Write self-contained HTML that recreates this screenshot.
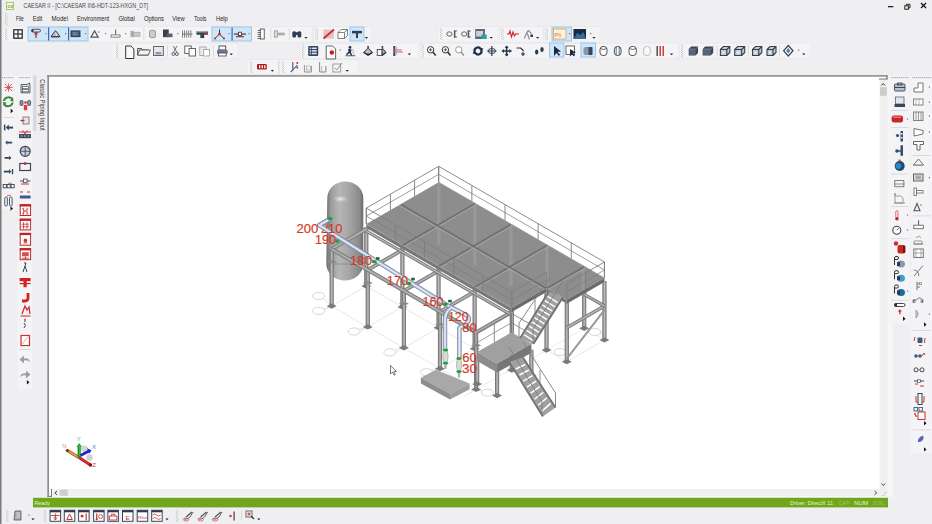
<!DOCTYPE html><html><head><meta charset="utf-8"><style>html,body{margin:0;padding:0;background:#efeff1;overflow:hidden}svg{display:block;font-family:"Liberation Sans",sans-serif}</style></head><body><svg width="932" height="524" viewBox="0 0 932 524"><rect x="0" y="0" width="932" height="524" fill="#efeff1" />
<rect x="0" y="0" width="1.5" height="524" fill="#7a7a7a" />
<rect x="6.5" y="2.5" width="7" height="7" fill="#f4f8e8" stroke="#a8c870" stroke-width="1"/>
<text x="7.5" y="8.2" font-size="4.2" fill="#6a8a30" font-weight="bold">CII</text>
<text x="23.5" y="8.4" font-size="7.1" fill="#4a4a4a" textLength="124.5" lengthAdjust="spacingAndGlyphs">CAESAR II - [C:\CAESAR II\6-HDT-123-HXGN_DT]</text>
<rect x="888" y="6" width="5.3" height="1.3" fill="#222" />
<g fill="none" stroke="#222" stroke-width="1"><rect x="904.8" y="5.8" width="3.6" height="3.4"/><path d="M906.3 5.8 V4.3 H910 V7.8 H908.4"/></g>
<g stroke="#111" stroke-width="1.2"><line x1="921" y1="3" x2="926" y2="8"/><line x1="926" y1="3" x2="921" y2="8"/></g>
<rect x="5" y="13" width="1" height="1" fill="#c4c4c4" />
<rect x="6.5" y="14" width="1" height="1" fill="#c4c4c4" />
<rect x="5" y="15" width="1" height="1" fill="#c4c4c4" />
<rect x="6.5" y="16" width="1" height="1" fill="#c4c4c4" />
<rect x="5" y="17" width="1" height="1" fill="#c4c4c4" />
<rect x="6.5" y="18" width="1" height="1" fill="#c4c4c4" />
<rect x="5" y="19" width="1" height="1" fill="#c4c4c4" />
<rect x="6.5" y="20" width="1" height="1" fill="#c4c4c4" />
<rect x="5" y="21" width="1" height="1" fill="#c4c4c4" />
<rect x="6.5" y="22" width="1" height="1" fill="#c4c4c4" />
<rect x="5" y="23" width="1" height="1" fill="#c4c4c4" />
<rect x="6.5" y="24" width="1" height="1" fill="#c4c4c4" />
<text x="15.9" y="21.1" font-size="6.9" fill="#1e1e1e" textLength="7.9" lengthAdjust="spacingAndGlyphs">File</text>
<text x="32.7" y="21.1" font-size="6.9" fill="#1e1e1e" textLength="9.7" lengthAdjust="spacingAndGlyphs">Edit</text>
<text x="51.5" y="21.1" font-size="6.9" fill="#1e1e1e" textLength="16.6" lengthAdjust="spacingAndGlyphs">Model</text>
<text x="76.9" y="21.1" font-size="6.9" fill="#1e1e1e" textLength="32.3" lengthAdjust="spacingAndGlyphs">Environment</text>
<text x="118.4" y="21.1" font-size="6.9" fill="#1e1e1e" textLength="16.4" lengthAdjust="spacingAndGlyphs">Global</text>
<text x="143.9" y="21.1" font-size="6.9" fill="#1e1e1e" textLength="20.1" lengthAdjust="spacingAndGlyphs">Options</text>
<text x="172.2" y="21.1" font-size="6.9" fill="#1e1e1e" textLength="12.4" lengthAdjust="spacingAndGlyphs">View</text>
<text x="194" y="21.1" font-size="6.9" fill="#1e1e1e" textLength="12.5" lengthAdjust="spacingAndGlyphs">Tools</text>
<text x="216" y="21.1" font-size="6.9" fill="#1e1e1e" textLength="11.8" lengthAdjust="spacingAndGlyphs">Help</text>
<rect x="3" y="26.5" width="309" height="15.5" fill="#f4f4f6" stroke="#e6e6e9" stroke-width="0.6"/>
<rect x="313.5" y="26.5" width="58.5" height="15.5" fill="#f4f4f6" stroke="#e6e6e9" stroke-width="0.6"/>
<rect x="438" y="26.5" width="61" height="15.5" fill="#f4f4f6" stroke="#e6e6e9" stroke-width="0.6"/>
<rect x="499.5" y="26.5" width="44.0" height="15.5" fill="#f4f4f6" stroke="#e6e6e9" stroke-width="0.6"/>
<rect x="544" y="26.5" width="56" height="15.5" fill="#f4f4f6" stroke="#e6e6e9" stroke-width="0.6"/>
<rect x="112" y="43.2" width="126" height="15.0" fill="#f4f4f6" stroke="#e6e6e9" stroke-width="0.6"/>
<rect x="300" y="43.2" width="119" height="15.0" fill="#f4f4f6" stroke="#e6e6e9" stroke-width="0.6"/>
<rect x="419.5" y="43.2" width="259.5" height="15.0" fill="#f4f4f6" stroke="#e6e6e9" stroke-width="0.6"/>
<rect x="679.5" y="43.2" width="131.5" height="15.0" fill="#f4f4f6" stroke="#e6e6e9" stroke-width="0.6"/>
<rect x="247" y="59.5" width="32" height="14.5" fill="#f4f4f6" stroke="#e6e6e9" stroke-width="0.6"/>
<rect x="279.5" y="59.5" width="78.5" height="14.5" fill="#f4f4f6" stroke="#e6e6e9" stroke-width="0.6"/>
<rect x="5" y="28" width="0.9" height="0.9" fill="#b8b8b8" />
<rect x="6.4" y="29" width="0.9" height="0.9" fill="#b8b8b8" />
<rect x="5" y="30" width="0.9" height="0.9" fill="#b8b8b8" />
<rect x="6.4" y="31" width="0.9" height="0.9" fill="#b8b8b8" />
<rect x="5" y="32" width="0.9" height="0.9" fill="#b8b8b8" />
<rect x="6.4" y="33" width="0.9" height="0.9" fill="#b8b8b8" />
<rect x="5" y="34" width="0.9" height="0.9" fill="#b8b8b8" />
<rect x="6.4" y="35" width="0.9" height="0.9" fill="#b8b8b8" />
<rect x="5" y="36" width="0.9" height="0.9" fill="#b8b8b8" />
<rect x="6.4" y="37" width="0.9" height="0.9" fill="#b8b8b8" />
<rect x="5" y="38" width="0.9" height="0.9" fill="#b8b8b8" />
<rect x="6.4" y="39" width="0.9" height="0.9" fill="#b8b8b8" />
<rect x="13" y="29" width="10" height="10" fill="#3e4550" rx="1"/>
<rect x="14.5" y="30.5" width="2.8" height="2.8" fill="#fff" />
<rect x="18.7" y="30.5" width="2.8" height="2.8" fill="#fff" />
<rect x="14.5" y="34.7" width="2.8" height="2.8" fill="#fff" />
<rect x="18.7" y="34.7" width="2.8" height="2.8" fill="#fff" />
<rect x="28.0" y="27.0" width="60.0" height="14.0" fill="#cfe5f8" stroke="#9ac6ec" stroke-width="1"/>
<rect x="48" y="27.5" width="1.2" height="13.0" fill="#3a6ab8" />
<rect x="68" y="27.5" width="1.2" height="13.0" fill="#3a6ab8" />
<rect x="31.5" y="29.3" width="9" height="2.6999999999999997" fill="#e4e4e4" rx="1.4" stroke="#3a4250" stroke-width="0.9"/>
<rect x="31.5" y="29.3" width="2" height="2.6999999999999997" fill="#2a3240" rx="1"/>
<rect x="35.4" y="33.5" width="1.2" height="4.5" fill="#c81818" />
<polygon points="34.0,34.58 38.0,34.58 36.0,32.6" fill="#c81818" />
<rect x="33.8" y="32.42" width="4.4" height="0.7" fill="#444" />
<rect x="45.4" y="33.0" width="1.2" height="1.2" fill="#777" />
<polygon points="51.0,36.52 55.5,30.58 60.0,36.52" fill="#b8bcc4" stroke="#2a3240" stroke-width="0.9"/>
<polygon points="55.5,31.75 57.3,34.9 56.0,35.8" fill="#f4f4f4" />
<path d="M51.5 38.05 l1 -1 l1 1 l1 -1 l1 1 l1 -1 l1 1 l1 -1 l1 1" fill="none" stroke="#d03030" stroke-width="0.7" />
<rect x="65" y="33.0" width="1.2" height="1.2" fill="#777" />
<rect x="70.5" y="30.4" width="10" height="6.75" fill="#34445a" />
<rect x="72.0" y="31.75" width="7" height="4.05" fill="#566a84" />
<path d="M73.5 32.65 h2 M73.5 34.45 h3" fill="none" stroke="#9aaabb" stroke-width="0.8" />
<rect x="85" y="33.0" width="1.2" height="1.2" fill="#777" />
<polygon points="91,37.15 94.6,30.85 98.2,37.15" fill="none" stroke="#555" stroke-width="1.2"/>
<text x="97.75" y="33.1" font-size="4" fill="#555" >x</text>
<rect x="105" y="33.0" width="1.2" height="1.2" fill="#777" />
<rect x="115.0" y="29.5" width="1.2" height="5.3999999999999995" fill="#777" />
<rect x="111" y="34.9" width="9" height="2.25" fill="#fff" stroke="#777" stroke-width="0.9"/>
<rect x="125" y="33.0" width="1.2" height="1.2" fill="#777" />
<rect x="130.5" y="30.85" width="3.3249999999999997" height="6.3" fill="#aaa" />
<rect x="133.35" y="32.2" width="6.6499999999999995" height="4.05" fill="#c8c8c8" stroke="#999" stroke-width="0.6"/>
<rect x="143.5" y="28" width="0.8" height="12" fill="#d6d6d6" />
<rect x="149.5" y="30.4" width="6" height="7.2" fill="#ccc" rx="1.5" stroke="#888" stroke-width="0.8"/>
<rect x="163" y="29.5" width="5.7" height="7.6499999999999995" fill="#3a3f48" />
<rect x="166.8" y="33.55" width="5.7" height="3.6" fill="#5a606a" />
<rect x="177.2" y="33.0" width="1.2" height="1.2" fill="#777" />
<rect x="182.0" y="30.4" width="0.9" height="7.2" fill="#777" />
<rect x="184.1" y="30.4" width="0.9" height="7.2" fill="#777" />
<rect x="186.2" y="30.4" width="0.9" height="7.2" fill="#777" />
<rect x="188.3" y="30.4" width="0.9" height="7.2" fill="#777" />
<rect x="190.4" y="30.4" width="0.9" height="7.2" fill="#777" />
<rect x="182" y="33.55" width="10.5" height="1" fill="#777" />
<rect x="196.5" y="31.3" width="11.5" height="3.42" fill="#3a3f48" />
<rect x="200.295" y="34.0" width="3.91" height="4.05" fill="#3a3f48" />
<rect x="197.0" y="31.3" width="10.5" height="1.08" fill="#b8b8c0" />
<rect x="205.7" y="32.2" width="1.7249999999999999" height="2.25" fill="#c04040" />
<rect x="212.0" y="27.0" width="39.5" height="14.0" fill="#cfe5f8" stroke="#9ac6ec" stroke-width="1"/>
<rect x="231.5" y="27.5" width="1.2" height="13.0" fill="#3a6ab8" />
<path d="M219.5 29.5 V34.0 L215 38.5 M219.5 34.0 L224 38.5" fill="none" stroke="#333" stroke-width="1" />
<circle cx="219.5" cy="34.0" r="1.3" fill="#d42020"/>
<circle cx="215" cy="38.5" r="1" fill="#d42020"/>
<circle cx="224" cy="38.5" r="1" fill="#d42020"/>
<rect x="228.5" y="33.0" width="1.2" height="1.2" fill="#777" />
<rect x="234" y="33.5" width="12" height="1.1" fill="#333" />
<rect x="238.5" y="32.2" width="3" height="3.4" fill="#fff" stroke="#333" stroke-width="0.8"/>
<rect x="236" y="36.0" width="8" height="1.2" fill="#d42020" />
<rect x="248.5" y="33.0" width="1.2" height="1.2" fill="#777" />
<rect x="260.2" y="29" width="4.05" height="10" fill="#fff" stroke="#555" stroke-width="0.9"/>
<rect x="257.5" y="30" width="3.6" height="0.8" fill="#555" />
<rect x="257.5" y="32" width="3.6" height="0.8" fill="#555" />
<rect x="257.5" y="34" width="3.6" height="0.8" fill="#555" />
<rect x="257.5" y="36" width="3.6" height="0.8" fill="#555" />
<rect x="257.5" y="38" width="3.6" height="0.8" fill="#555" />
<rect x="270.5" y="28" width="0.8" height="12" fill="#d6d6d6" />
<rect x="274.3" y="30.85" width="3.15" height="6.3" fill="#ddd" stroke="#888" stroke-width="0.7"/>
<rect x="277.45" y="32.65" width="7.35" height="2.6999999999999997" fill="#aaa" />
<rect x="288.8" y="28" width="0.8" height="12" fill="#d6d6d6" />
<rect x="292.3" y="31.3" width="3.78" height="6.3" fill="#2e3f55" rx="1.5"/>
<rect x="297.52000000000004" y="31.3" width="3.78" height="6.3" fill="#2e3f55" rx="1.5"/>
<rect x="295.0" y="32.2" width="3.6" height="2.6999999999999997" fill="#2e3f55" />
<polygon points="304.4,37 307.6,37 306,38.8" fill="#222" />
<rect x="315.5" y="28" width="0.9" height="0.9" fill="#b8b8b8" />
<rect x="316.9" y="29" width="0.9" height="0.9" fill="#b8b8b8" />
<rect x="315.5" y="30" width="0.9" height="0.9" fill="#b8b8b8" />
<rect x="316.9" y="31" width="0.9" height="0.9" fill="#b8b8b8" />
<rect x="315.5" y="32" width="0.9" height="0.9" fill="#b8b8b8" />
<rect x="316.9" y="33" width="0.9" height="0.9" fill="#b8b8b8" />
<rect x="315.5" y="34" width="0.9" height="0.9" fill="#b8b8b8" />
<rect x="316.9" y="35" width="0.9" height="0.9" fill="#b8b8b8" />
<rect x="315.5" y="36" width="0.9" height="0.9" fill="#b8b8b8" />
<rect x="316.9" y="37" width="0.9" height="0.9" fill="#b8b8b8" />
<rect x="315.5" y="38" width="0.9" height="0.9" fill="#b8b8b8" />
<rect x="316.9" y="39" width="0.9" height="0.9" fill="#b8b8b8" />
<rect x="323.5" y="29.5" width="10.5" height="9" fill="#e8c0c0" />
<path d="M323.5 38.5 L334.0 29.5" fill="none" stroke="#c03030" stroke-width="1.8" />
<path d="M338 32.5 h6.5 v6 h-6.5 z M338 32.5 l3 -3 h6.5 v6 l-3 3 M344.5 32.5 l3 -3" fill="#fff" stroke="#666" stroke-width="0.8" />
<rect x="350.0" y="27.0" width="14.0" height="14.0" fill="#cfe5f8" stroke="#9ac6ec" stroke-width="1"/>
<rect x="352" y="30.85" width="10" height="2.5200000000000005" fill="#2e3f55" />
<rect x="356.0" y="32.2" width="2" height="5.8500000000000005" fill="#2e3f55" />
<polygon points="364.9,37 368.1,37 366.5,38.8" fill="#222" />
<rect x="440" y="28" width="0.9" height="0.9" fill="#b8b8b8" />
<rect x="441.4" y="29" width="0.9" height="0.9" fill="#b8b8b8" />
<rect x="440" y="30" width="0.9" height="0.9" fill="#b8b8b8" />
<rect x="441.4" y="31" width="0.9" height="0.9" fill="#b8b8b8" />
<rect x="440" y="32" width="0.9" height="0.9" fill="#b8b8b8" />
<rect x="441.4" y="33" width="0.9" height="0.9" fill="#b8b8b8" />
<rect x="440" y="34" width="0.9" height="0.9" fill="#b8b8b8" />
<rect x="441.4" y="35" width="0.9" height="0.9" fill="#b8b8b8" />
<rect x="440" y="36" width="0.9" height="0.9" fill="#b8b8b8" />
<rect x="441.4" y="37" width="0.9" height="0.9" fill="#b8b8b8" />
<rect x="440" y="38" width="0.9" height="0.9" fill="#b8b8b8" />
<rect x="441.4" y="39" width="0.9" height="0.9" fill="#b8b8b8" />
<ellipse cx="449.4" cy="34.0" rx="2.6" ry="2.2" fill="none" stroke="#555" stroke-width="0.9"/>
<rect x="453.9" y="30.5" width="1.5" height="7" fill="#555" />
<rect x="453.9" y="30.5" width="3" height="1" fill="#555" />
<rect x="453.9" y="36.5" width="3" height="1" fill="#555" />
<ellipse cx="464.2" cy="34.0" rx="2.6" ry="2.2" fill="none" stroke="#555" stroke-width="0.9"/>
<rect x="467.7" y="30.5" width="1.5" height="7" fill="#555" />
<rect x="467.7" y="30.5" width="3" height="1" fill="#555" />
<rect x="467.7" y="36.5" width="3" height="1" fill="#555" />
<rect x="475.2" y="29" width="9.775" height="10" fill="#5a6a80" />
<rect x="476.2" y="31" width="6.8999999999999995" height="5.5" fill="#c8d4e0" />
<rect x="481.525" y="34.5" width="5.175" height="4.5" fill="#2aa0a0" />
<polygon points="489.59999999999997,37 492.8,37 491.2,38.8" fill="#222" />
<rect x="501.2" y="28" width="0.9" height="0.9" fill="#b8b8b8" />
<rect x="502.59999999999997" y="29" width="0.9" height="0.9" fill="#b8b8b8" />
<rect x="501.2" y="30" width="0.9" height="0.9" fill="#b8b8b8" />
<rect x="502.59999999999997" y="31" width="0.9" height="0.9" fill="#b8b8b8" />
<rect x="501.2" y="32" width="0.9" height="0.9" fill="#b8b8b8" />
<rect x="502.59999999999997" y="33" width="0.9" height="0.9" fill="#b8b8b8" />
<rect x="501.2" y="34" width="0.9" height="0.9" fill="#b8b8b8" />
<rect x="502.59999999999997" y="35" width="0.9" height="0.9" fill="#b8b8b8" />
<rect x="501.2" y="36" width="0.9" height="0.9" fill="#b8b8b8" />
<rect x="502.59999999999997" y="37" width="0.9" height="0.9" fill="#b8b8b8" />
<rect x="501.2" y="38" width="0.9" height="0.9" fill="#b8b8b8" />
<rect x="502.59999999999997" y="39" width="0.9" height="0.9" fill="#b8b8b8" />
<path d="M507 34.0 h2 l1 -3 l1.5 6 l1.5 -5 l1.5 4 l1 -2 h3.5" fill="none" stroke="#d42020" stroke-width="1.1" />
<path d="M524.4 38.5 q2 -6 4 -8 l3 3 M527.4 33.5 l2 6" fill="none" stroke="#888" stroke-width="1.1" />
<rect x="530.4" y="34.5" width="2.5" height="2.5" fill="#333" />
<polygon points="536.0,37 539.2,37 537.6,38.8" fill="#222" />
<rect x="545.5" y="28" width="0.9" height="0.9" fill="#b8b8b8" />
<rect x="546.9" y="29" width="0.9" height="0.9" fill="#b8b8b8" />
<rect x="545.5" y="30" width="0.9" height="0.9" fill="#b8b8b8" />
<rect x="546.9" y="31" width="0.9" height="0.9" fill="#b8b8b8" />
<rect x="545.5" y="32" width="0.9" height="0.9" fill="#b8b8b8" />
<rect x="546.9" y="33" width="0.9" height="0.9" fill="#b8b8b8" />
<rect x="545.5" y="34" width="0.9" height="0.9" fill="#b8b8b8" />
<rect x="546.9" y="35" width="0.9" height="0.9" fill="#b8b8b8" />
<rect x="545.5" y="36" width="0.9" height="0.9" fill="#b8b8b8" />
<rect x="546.9" y="37" width="0.9" height="0.9" fill="#b8b8b8" />
<rect x="545.5" y="38" width="0.9" height="0.9" fill="#b8b8b8" />
<rect x="546.9" y="39" width="0.9" height="0.9" fill="#b8b8b8" />
<rect x="552.0" y="27.0" width="19.5" height="14.0" fill="#cfe5f8" stroke="#9ac6ec" stroke-width="1"/>
<rect x="553.5" y="29" width="12.5" height="10" fill="#fff2dd" stroke="#e09040" stroke-width="0.7"/>
<text x="554.5" y="36.5" font-size="5.5" fill="#d07020" >Plt</text>
<rect x="569" y="33.0" width="1.2" height="1.2" fill="#777" />
<rect x="573.5" y="29" width="12.5" height="10" fill="#1a2a40" />
<polygon points="573.5,39 577.25,33.0 580.375,35.0 583.5,32.0 586.0,39" fill="#3a6a9a" />
<rect x="590" y="33.0" width="1.2" height="1.2" fill="#777" />
<polygon points="592.4,37 595.6,37 594,38.8" fill="#222" />
<rect x="116" y="44" width="0.9" height="0.9" fill="#b8b8b8" />
<rect x="117.4" y="45" width="0.9" height="0.9" fill="#b8b8b8" />
<rect x="116" y="46" width="0.9" height="0.9" fill="#b8b8b8" />
<rect x="117.4" y="47" width="0.9" height="0.9" fill="#b8b8b8" />
<rect x="116" y="48" width="0.9" height="0.9" fill="#b8b8b8" />
<rect x="117.4" y="49" width="0.9" height="0.9" fill="#b8b8b8" />
<rect x="116" y="50" width="0.9" height="0.9" fill="#b8b8b8" />
<rect x="117.4" y="51" width="0.9" height="0.9" fill="#b8b8b8" />
<rect x="116" y="52" width="0.9" height="0.9" fill="#b8b8b8" />
<rect x="117.4" y="53" width="0.9" height="0.9" fill="#b8b8b8" />
<rect x="116" y="54" width="0.9" height="0.9" fill="#b8b8b8" />
<rect x="117.4" y="55" width="0.9" height="0.9" fill="#b8b8b8" />
<rect x="116" y="56" width="0.9" height="0.9" fill="#b8b8b8" />
<rect x="117.4" y="57" width="0.9" height="0.9" fill="#b8b8b8" />
<path d="M125.7 46 h5.199999999999999 l3 3 v9.5 h-8.2 z" fill="#fafafa" stroke="#333" stroke-width="1" />
<path d="M137.6 48.5 h4 l1 1.5 h5.800000000000001 v5 h-10.8 z" fill="#ddd" stroke="#444" stroke-width="0.9" />
<path d="M137.6 55.0 l2 -5 h10.8 l-2 5 z" fill="#f4f4f4" stroke="#444" stroke-width="0.8" />
<rect x="153.6" y="46.5" width="9.7" height="9" fill="#e8e8ec" stroke="#555" stroke-width="0.9"/>
<rect x="155.6" y="52" width="5.699999999999999" height="2.5" fill="#8a9ab0" />
<rect x="167" y="45" width="0.8" height="12" fill="#d6d6d6" />
<circle cx="173.4" cy="54" r="1.5" fill="none" stroke="#555" stroke-width="0.9"/><circle cx="176.9" cy="54" r="1.5" fill="none" stroke="#555" stroke-width="0.9"/>
<path d="M173.4 46 L176.9 52.5 M176.9 46 L173.4 52.5" fill="none" stroke="#666" stroke-width="0.9" />
<rect x="184.8" y="46" width="6.419999999999999" height="7.5" fill="#fff" stroke="#555" stroke-width="0.9"/>
<rect x="189.08" y="48.5" width="6.419999999999999" height="7.5" fill="#fff" stroke="#555" stroke-width="0.9"/>
<rect x="199.8" y="47" width="6.24" height="8.5" fill="#eee" stroke="#999" stroke-width="0.8"/>
<rect x="203.64000000000001" y="49.5" width="5.76" height="6.5" fill="#fff" stroke="#999" stroke-width="0.8"/>
<rect x="213" y="45" width="0.8" height="12" fill="#d6d6d6" />
<rect x="219" y="46" width="6.699999999999999" height="4.0" fill="#fff" stroke="#444" stroke-width="0.9"/>
<rect x="217" y="49.5" width="10.7" height="4.5" fill="#6a7a8e" rx="1.5"/>
<rect x="218.5" y="53.0" width="7.699999999999999" height="3.0" fill="#fff" stroke="#444" stroke-width="0.8"/>
<polygon points="229.70000000000002,53.5 232.9,53.5 231.3,55.3" fill="#222" />
<rect x="302" y="44" width="0.9" height="0.9" fill="#b8b8b8" />
<rect x="303.4" y="45" width="0.9" height="0.9" fill="#b8b8b8" />
<rect x="302" y="46" width="0.9" height="0.9" fill="#b8b8b8" />
<rect x="303.4" y="47" width="0.9" height="0.9" fill="#b8b8b8" />
<rect x="302" y="48" width="0.9" height="0.9" fill="#b8b8b8" />
<rect x="303.4" y="49" width="0.9" height="0.9" fill="#b8b8b8" />
<rect x="302" y="50" width="0.9" height="0.9" fill="#b8b8b8" />
<rect x="303.4" y="51" width="0.9" height="0.9" fill="#b8b8b8" />
<rect x="302" y="52" width="0.9" height="0.9" fill="#b8b8b8" />
<rect x="303.4" y="53" width="0.9" height="0.9" fill="#b8b8b8" />
<rect x="302" y="54" width="0.9" height="0.9" fill="#b8b8b8" />
<rect x="303.4" y="55" width="0.9" height="0.9" fill="#b8b8b8" />
<rect x="302" y="56" width="0.9" height="0.9" fill="#b8b8b8" />
<rect x="303.4" y="57" width="0.9" height="0.9" fill="#b8b8b8" />
<rect x="308.2" y="46" width="10" height="10" fill="#2e4560" rx="1"/>
<rect x="309.7" y="47.5" width="1.5" height="1.6" fill="#dde" />
<rect x="312.0" y="47.5" width="4.7" height="1.6" fill="#dde" />
<rect x="309.7" y="50.1" width="1.5" height="1.6" fill="#dde" />
<rect x="312.0" y="50.1" width="4.7" height="1.6" fill="#dde" />
<rect x="309.7" y="52.7" width="1.5" height="1.6" fill="#dde" />
<rect x="312.0" y="52.7" width="4.7" height="1.6" fill="#dde" />
<path d="M326.2 46 h6.4 l3 3 v10 h-9.4 z" fill="#fff" stroke="#555" stroke-width="0.9" />
<circle cx="331.84" cy="52.5" r="2.2" fill="#d01818"/>
<rect x="339.6" y="49.5" width="1.2" height="1.2" fill="#777" />
<circle cx="350" cy="47.4" r="1.4" fill="#24364e"/>
<polygon points="348,49 351.5,49.2 351,52.5 352.5,55.5 351,55.8 349.5,53 347.2,55 345.8,54.5 348.5,51.5" fill="#24364e" />
<path d="M352 49 l2 2 M352.5 51 l1.5 3.5" fill="none" stroke="#aab4c0" stroke-width="0.9" />
<rect x="345.5" y="55.4" width="9.7" height="0.8" fill="#333" />
<polygon points="368.1,47.5 373.2,52.8 368.1,56 363,52.8" fill="#2a2a2a" />
<polygon points="368.1,48.2 371.59999999999997,52.6 368.1,53.8 364.6,52.6" fill="#b8c0c8" />
<rect x="367.3" y="46" width="1.6" height="1.8" fill="#333" />
<polygon points="382.37,47.5 386.59999999999997,52.8 382.37,56 379.08,52.8" fill="#2a2a2a" />
<polygon points="382.37,48.2 385.2,52.6 382.37,54" fill="#a8b4c0" />
<rect x="377.2" y="49.5" width="4.7" height="6.0" fill="#f4f4f4" stroke="#333" stroke-width="0.8"/>
<rect x="381.57" y="46" width="1.6" height="1.8" fill="#333" />
<rect x="393.3" y="46" width="2" height="10" fill="#2e4560" />
<rect x="393.3" y="49.5" width="8.399999999999999" height="1" fill="#d06060" />
<rect x="393.3" y="51.5" width="9.600000000000001" height="1" fill="#d06060" />
<rect x="396.3" y="47" width="0.8" height="8" fill="#9ab" />
<polygon points="407.79999999999995,53.5 411.0,53.5 409.4,55.3" fill="#222" />
<rect x="421.4" y="44" width="0.9" height="0.9" fill="#b8b8b8" />
<rect x="422.79999999999995" y="45" width="0.9" height="0.9" fill="#b8b8b8" />
<rect x="421.4" y="46" width="0.9" height="0.9" fill="#b8b8b8" />
<rect x="422.79999999999995" y="47" width="0.9" height="0.9" fill="#b8b8b8" />
<rect x="421.4" y="48" width="0.9" height="0.9" fill="#b8b8b8" />
<rect x="422.79999999999995" y="49" width="0.9" height="0.9" fill="#b8b8b8" />
<rect x="421.4" y="50" width="0.9" height="0.9" fill="#b8b8b8" />
<rect x="422.79999999999995" y="51" width="0.9" height="0.9" fill="#b8b8b8" />
<rect x="421.4" y="52" width="0.9" height="0.9" fill="#b8b8b8" />
<rect x="422.79999999999995" y="53" width="0.9" height="0.9" fill="#b8b8b8" />
<rect x="421.4" y="54" width="0.9" height="0.9" fill="#b8b8b8" />
<rect x="422.79999999999995" y="55" width="0.9" height="0.9" fill="#b8b8b8" />
<rect x="421.4" y="56" width="0.9" height="0.9" fill="#b8b8b8" />
<rect x="422.79999999999995" y="57" width="0.9" height="0.9" fill="#b8b8b8" />
<circle cx="430.6" cy="49.8" r="3.2" fill="#fff" stroke="#333" stroke-width="1"/>
<path d="M432.8 52 l2.9000000000000004 3.5" fill="none" stroke="#333" stroke-width="1.6" />
<path d="M429.0 49.8 h3.2 M430.6 48.2 v3.2" fill="none" stroke="#333" stroke-width="0.8" />
<circle cx="445.40000000000003" cy="49.8" r="3.2" fill="#fff" stroke="#333" stroke-width="1"/>
<path d="M447.6 52 l2.9000000000000004 3.5" fill="none" stroke="#333" stroke-width="1.6" />
<path d="M443.8 49.8 h3.2 M445.40000000000003 48.2 v3.2" fill="none" stroke="#333" stroke-width="0.8" />
<circle cx="458.8" cy="49.8" r="3.2" fill="#fff" stroke="#999" stroke-width="1"/>
<path d="M461 52 l2.9000000000000004 3.5" fill="none" stroke="#999" stroke-width="1.6" />
<path d="M474.6 51.8 A3.4 3.4 0 0 1 480.79999999999995 49.2" fill="none" stroke="#1e2e48" stroke-width="2.2" />
<path d="M481.4 50.2 A3.4 3.4 0 0 1 475.20000000000005 52.8" fill="none" stroke="#1e2e48" stroke-width="2.2" />
<polygon points="483.4,48.5 478.79999999999995,47.8 481.4,51.8" fill="#1e2e48" />
<polygon points="472.6,53.5 477.20000000000005,54.2 474.6,50.2" fill="#1e2e48" />
<path d="M491.84999999999997 46 v10 M487.2 51.0 h9.3" fill="none" stroke="#2a3a50" stroke-width="1.2" />
<ellipse cx="491.84999999999997" cy="51.0" rx="3.6500000000000004" ry="2.5" fill="none" stroke="#2a3a50" stroke-width="0.9"/>
<path d="M506.65 46 v10 M502 51.0 h9.3" fill="none" stroke="#2a3a50" stroke-width="1.6" />
<polygon points="506.65,45.5 504.65,48 508.65,48" fill="#2a3a50" />
<polygon points="506.65,56.5 504.65,54 508.65,54" fill="#2a3a50" />
<polygon points="501.5,51.0 504,49.0 504,53.0" fill="#2a3a50" />
<polygon points="511.8,51.0 509.3,49.0 509.3,53.0" fill="#2a3a50" />
<path d="M516.7 48 h4 l3 3" fill="none" stroke="#333" stroke-width="1.2" />
<path d="M523.0 52 v4 M521.0 54 h4" fill="none" stroke="#333" stroke-width="1.2" />
<ellipse cx="536.7" cy="52.0" rx="1.7" ry="2.6" fill="#2a3a50"/><ellipse cx="542.0" cy="49.5" rx="1.7" ry="2.6" fill="#2a3a50"/>
<rect x="549.5" y="43.0" width="14.5" height="14.0" fill="#cfe5f8" stroke="#9ac6ec" stroke-width="1"/>
<polygon points="554,46 554,56 556.5,53.0 559,56 560,54.5 557.5,52.0 561,51.5" fill="#1a2a40" />
<rect x="566" y="46" width="8.5" height="8.5" fill="#fff" stroke="#444" stroke-width="0.8"/>
<polygon points="570,49 570,56.5 572,54.5 574,56.5 575,55.0 573,53.0 576,52.5" fill="#1a2a40" />
<rect x="581.0" y="43.0" width="14.5" height="14.0" fill="#cfe5f8" stroke="#9ac6ec" stroke-width="1"/>
<rect x="583.5" y="47" width="9" height="8" fill="#8a98aa" rx="2"/>
<rect x="588.55" y="47" width="3.8499999999999996" height="8" fill="#34475e" />
<rect x="600" y="46.5" width="7" height="9" fill="#fff" rx="3" stroke="#444" stroke-width="0.9"/>
<path d="M600 48.5 q3.5 2 7 0" fill="none" stroke="#444" stroke-width="0.8" />
<rect x="614.4" y="46.5" width="6.6" height="9" fill="#fff" rx="3" stroke="#3a4a5e" stroke-width="1"/>
<path d="M616.1999999999999 47 v8 M619.1999999999999 47 v8" fill="none" stroke="#3a4a5e" stroke-width="0.8" />
<rect x="629" y="46.5" width="7.300000000000001" height="9" fill="#fff" rx="3" stroke="#444" stroke-width="0.9"/>
<path d="M629 48.5 q3.6500000000000004 2 7.300000000000001 0" fill="none" stroke="#444" stroke-width="0.8" />
<rect x="643.6" y="46.5" width="6.699999999999999" height="9" fill="#fafafa" rx="3" stroke="#aaa" stroke-width="0.8"/>
<rect x="656.5" y="46" width="1.4" height="10" fill="#444" />
<rect x="659.5" y="46" width="1.4" height="10" fill="#c83030" />
<rect x="662.5" y="46" width="1.4" height="10" fill="#c83030" />
<polygon points="670.0,53.5 673.2,53.5 671.6,55.3" fill="#222" />
<rect x="681" y="44" width="0.9" height="0.9" fill="#b8b8b8" />
<rect x="682.4" y="45" width="0.9" height="0.9" fill="#b8b8b8" />
<rect x="681" y="46" width="0.9" height="0.9" fill="#b8b8b8" />
<rect x="682.4" y="47" width="0.9" height="0.9" fill="#b8b8b8" />
<rect x="681" y="48" width="0.9" height="0.9" fill="#b8b8b8" />
<rect x="682.4" y="49" width="0.9" height="0.9" fill="#b8b8b8" />
<rect x="681" y="50" width="0.9" height="0.9" fill="#b8b8b8" />
<rect x="682.4" y="51" width="0.9" height="0.9" fill="#b8b8b8" />
<rect x="681" y="52" width="0.9" height="0.9" fill="#b8b8b8" />
<rect x="682.4" y="53" width="0.9" height="0.9" fill="#b8b8b8" />
<rect x="681" y="54" width="0.9" height="0.9" fill="#b8b8b8" />
<rect x="682.4" y="55" width="0.9" height="0.9" fill="#b8b8b8" />
<rect x="681" y="56" width="0.9" height="0.9" fill="#b8b8b8" />
<rect x="682.4" y="57" width="0.9" height="0.9" fill="#b8b8b8" />
<polygon points="688.7,49.0 691.2,46.5 698.0,46.5 698.0,53.0 695.5,55.5 688.7,55.5" fill="#3a4658" />
<rect x="689.2" y="49.3" width="6.300000000000001" height="5.7" fill="#56647a" />
<path d="M689.2 49.1 h6.300000000000001 l2.5 -2.5" fill="none" stroke="#9aa4b4" stroke-width="0.6" />
<polygon points="702.7,49.0 705.2,46.5 713.2,46.5 713.2,53.0 710.7,55.5 702.7,55.5" fill="#3a4658" />
<rect x="703.2" y="49.3" width="7.5" height="5.7" fill="#56647a" />
<path d="M703.2 49.1 h7.5 l2.5 -2.5" fill="none" stroke="#9aa4b4" stroke-width="0.6" />
<rect x="716.7" y="45" width="0.8" height="12" fill="#d6d6d6" />
<path d="M720.4 49.5 h6.4 v6 h-6.4 z M720.4 49.5 l3 -3 h6.4 v6 l-3 3 M726.8 49.5 l3 -3" fill="#c4cad4" stroke="#34404e" stroke-width="1.1" />
<rect x="722.4" y="51.5" width="2.4000000000000004" height="2" fill="#f0f2f4" />
<path d="M734.7 49.5 h7 v6 h-7 z M734.7 49.5 l3 -3 h7 v6 l-3 3 M741.7 49.5 l3 -3" fill="#c4cad4" stroke="#34404e" stroke-width="1.1" />
<rect x="736.7" y="51.5" width="3" height="2" fill="#f0f2f4" />
<rect x="747.8" y="45" width="0.8" height="12" fill="#d6d6d6" />
<path d="M752.5 49.5 h6.300000000000001 v6 h-6.300000000000001 z M752.5 49.5 l3 -3 h6.300000000000001 v6 l-3 3 M758.8 49.5 l3 -3" fill="#c4cad4" stroke="#34404e" stroke-width="1.1" />
<rect x="754.5" y="51.5" width="2.3000000000000007" height="2" fill="#f0f2f4" />
<path d="M767 49.5 h6 v6 h-6 z M767 49.5 l3 -3 h6 v6 l-3 3 M773 49.5 l3 -3" fill="#c4cad4" stroke="#34404e" stroke-width="1.1" />
<rect x="769" y="51.5" width="2" height="2" fill="#f0f2f4" />
<rect x="779" y="45" width="0.8" height="12" fill="#d6d6d6" />
<polygon points="788.3000000000001,45.5 793.0,50.75 788.3000000000001,56.0 783.6,50.75" fill="#fff" stroke="#2e4560" stroke-width="1.2"/>
<polygon points="788.3000000000001,48.0 790.5,50.75 788.3000000000001,53.5 786.1,50.75" fill="#6a7a90" />
<rect x="798" y="49.5" width="1.2" height="1.2" fill="#777" />
<polygon points="802.1999999999999,53.5 805.4,53.5 803.8,55.3" fill="#222" />
<rect x="250" y="61" width="0.9" height="0.9" fill="#b8b8b8" />
<rect x="251.4" y="62" width="0.9" height="0.9" fill="#b8b8b8" />
<rect x="250" y="63" width="0.9" height="0.9" fill="#b8b8b8" />
<rect x="251.4" y="64" width="0.9" height="0.9" fill="#b8b8b8" />
<rect x="250" y="65" width="0.9" height="0.9" fill="#b8b8b8" />
<rect x="251.4" y="66" width="0.9" height="0.9" fill="#b8b8b8" />
<rect x="250" y="67" width="0.9" height="0.9" fill="#b8b8b8" />
<rect x="251.4" y="68" width="0.9" height="0.9" fill="#b8b8b8" />
<rect x="250" y="69" width="0.9" height="0.9" fill="#b8b8b8" />
<rect x="251.4" y="70" width="0.9" height="0.9" fill="#b8b8b8" />
<rect x="250" y="71" width="0.9" height="0.9" fill="#b8b8b8" />
<rect x="251.4" y="72" width="0.9" height="0.9" fill="#b8b8b8" />
<rect x="257" y="64" width="9.8" height="5.5" fill="#b01818" rx="1"/>
<rect x="259.0" y="65.2" width="1.3" height="3.1" fill="#fff" />
<rect x="261.6" y="65.2" width="1.3" height="3.1" fill="#fff" />
<rect x="264.2" y="65.2" width="1.3" height="3.1" fill="#fff" />
<polygon points="270.79999999999995,70 274.0,70 272.4,71.8" fill="#222" />
<rect x="278" y="61" width="0.8" height="12" fill="#d6d6d6" />
<rect x="281.8" y="61" width="0.9" height="0.9" fill="#b8b8b8" />
<rect x="283.2" y="62" width="0.9" height="0.9" fill="#b8b8b8" />
<rect x="281.8" y="63" width="0.9" height="0.9" fill="#b8b8b8" />
<rect x="283.2" y="64" width="0.9" height="0.9" fill="#b8b8b8" />
<rect x="281.8" y="65" width="0.9" height="0.9" fill="#b8b8b8" />
<rect x="283.2" y="66" width="0.9" height="0.9" fill="#b8b8b8" />
<rect x="281.8" y="67" width="0.9" height="0.9" fill="#b8b8b8" />
<rect x="283.2" y="68" width="0.9" height="0.9" fill="#b8b8b8" />
<rect x="281.8" y="69" width="0.9" height="0.9" fill="#b8b8b8" />
<rect x="283.2" y="70" width="0.9" height="0.9" fill="#b8b8b8" />
<rect x="281.8" y="71" width="0.9" height="0.9" fill="#b8b8b8" />
<rect x="283.2" y="72" width="0.9" height="0.9" fill="#b8b8b8" />
<path d="M292.8 62 v8 l-2 2 M292.8 70 l4.5 -5.0" fill="none" stroke="#3a5a80" stroke-width="1.1" />
<circle cx="297.3" cy="63" r="1" fill="#d42020"/><circle cx="297.3" cy="67.5" r="1" fill="#d42020"/>
<path d="M304.4 65 v7 h7 v-6" fill="none" stroke="#888" stroke-width="0.9" />
<rect x="306.4" y="66" width="4" height="4" fill="none" stroke="#aaa" stroke-width="0.7"/>
<path d="M319.6 62 v10 h6.300000000000001 v-6.0" fill="none" stroke="#888" stroke-width="1" />
<path d="M321.6 66.0 v6.0" fill="none" stroke="#aaa" stroke-width="0.8" />
<rect x="332.9" y="64" width="7.800000000000001" height="8" fill="#f4f4f4" stroke="#888" stroke-width="0.8"/>
<path d="M334.9 68 l2 2 l5 -7" fill="none" stroke="#888" stroke-width="0.9" />
<polygon points="345.59999999999997,70 348.8,70 347.2,71.8" fill="#222" />
<rect x="47.3" y="75" width="840" height="422" fill="#fff" />
<rect x="47.3" y="75.1" width="1.75" height="421.6" fill="#8e8e8e" />
<rect x="47.3" y="75.1" width="840.4" height="1.6" fill="#8e8e8e" />
<rect x="886.1" y="75.1" width="1.6" height="4.6" fill="#8e8e8e" />
<rect x="879.1" y="78.4" width="8.6" height="1.4" fill="#8e8e8e" />
<rect x="879.6" y="79.8" width="8" height="409.2" fill="#f0f0f0" />
<path d="M881.3 85.5 l1.9 -2 l1.9 2" fill="none" stroke="#333" stroke-width="1" />
<rect x="880" y="87.2" width="6.8" height="8.6" fill="#cdcdcd" />
<path d="M881.5 483.5 l1.8 2 l1.8 -2" fill="none" stroke="#333" stroke-width="0.9" />
<rect x="52.5" y="489" width="827.5" height="7.5" fill="#f0f0f0" />
<rect x="47.3" y="495.9" width="4.6" height="0.9" fill="#777" />
<rect x="51.2" y="488.8" width="0.8" height="8" fill="#555" />
<path d="M57 491 l-2.2 1.9 l2.2 1.9" fill="none" stroke="#333" stroke-width="0.9" />
<rect x="59.7" y="489.5" width="8" height="6.3" fill="#cdcdcd" />
<path d="M874.5 491 l2.2 1.9 l-2.2 1.9" fill="none" stroke="#333" stroke-width="0.9" />
<rect x="882.5" y="495.0" width="0.8" height="0.8" fill="#aaa" />
<rect x="883.8" y="493.7" width="0.8" height="0.8" fill="#aaa" />
<rect x="885.1" y="492.4" width="0.8" height="0.8" fill="#aaa" />
<rect x="880" y="489" width="7.6" height="7.8" fill="#f0f0f0" />
<rect x="882.5" y="495.0" width="0.9" height="0.9" fill="#999" />
<rect x="884.0" y="493.5" width="0.9" height="0.9" fill="#999" />
<rect x="885.5" y="492.0" width="0.9" height="0.9" fill="#999" />
<rect x="887.7" y="79" width="5" height="418" fill="#f6f6f7" />
<rect x="33" y="497.8" width="855" height="9.6" fill="#70a61c" />
<text x="34.5" y="505.2" font-size="6.2" fill="#e6f5d0" textLength="15.5" lengthAdjust="spacingAndGlyphs">Ready</text>
<text x="790" y="505.2" font-size="6.2" fill="#e6f5d0" textLength="43" lengthAdjust="spacingAndGlyphs">Driver: DirectX 11</text>
<text x="838.5" y="505.2" font-size="6.2" fill="#9cc46a" textLength="11" lengthAdjust="spacingAndGlyphs">CAP</text>
<text x="854" y="505.2" font-size="6.2" fill="#e6f5d0" textLength="14" lengthAdjust="spacingAndGlyphs">NUM</text>
<text x="873" y="505.2" font-size="6.2" fill="#9cc46a" textLength="11.5" lengthAdjust="spacingAndGlyphs">SCRL</text>
<rect x="6" y="510" width="0.9" height="0.9" fill="#b8b8b8" />
<rect x="7.4" y="511" width="0.9" height="0.9" fill="#b8b8b8" />
<rect x="6" y="512" width="0.9" height="0.9" fill="#b8b8b8" />
<rect x="7.4" y="513" width="0.9" height="0.9" fill="#b8b8b8" />
<rect x="6" y="514" width="0.9" height="0.9" fill="#b8b8b8" />
<rect x="7.4" y="515" width="0.9" height="0.9" fill="#b8b8b8" />
<rect x="6" y="516" width="0.9" height="0.9" fill="#b8b8b8" />
<rect x="7.4" y="517" width="0.9" height="0.9" fill="#b8b8b8" />
<rect x="6" y="518" width="0.9" height="0.9" fill="#b8b8b8" />
<rect x="7.4" y="519" width="0.9" height="0.9" fill="#b8b8b8" />
<rect x="6" y="520" width="0.9" height="0.9" fill="#b8b8b8" />
<rect x="7.4" y="521" width="0.9" height="0.9" fill="#b8b8b8" />
<path d="M15 511 h6 v9 h-7 z" fill="#aab0b8" stroke="#555" stroke-width="0.8" />
<path d="M16.5 513 h3.5 M16.5 515 h3.5 M16.5 517 h3.5" fill="none" stroke="#eee" stroke-width="0.6" />
<rect x="28.5" y="514.5" width="1.2" height="1.2" fill="#777" />
<polygon points="31.4,518.5 34.6,518.5 33,520.3" fill="#222" />
<rect x="43.6" y="510" width="0.9" height="0.9" fill="#b8b8b8" />
<rect x="45.0" y="511" width="0.9" height="0.9" fill="#b8b8b8" />
<rect x="43.6" y="512" width="0.9" height="0.9" fill="#b8b8b8" />
<rect x="45.0" y="513" width="0.9" height="0.9" fill="#b8b8b8" />
<rect x="43.6" y="514" width="0.9" height="0.9" fill="#b8b8b8" />
<rect x="45.0" y="515" width="0.9" height="0.9" fill="#b8b8b8" />
<rect x="43.6" y="516" width="0.9" height="0.9" fill="#b8b8b8" />
<rect x="45.0" y="517" width="0.9" height="0.9" fill="#b8b8b8" />
<rect x="43.6" y="518" width="0.9" height="0.9" fill="#b8b8b8" />
<rect x="45.0" y="519" width="0.9" height="0.9" fill="#b8b8b8" />
<rect x="43.6" y="520" width="0.9" height="0.9" fill="#b8b8b8" />
<rect x="45.0" y="521" width="0.9" height="0.9" fill="#b8b8b8" />
<rect x="50.1" y="510.3" width="10.5" height="11" fill="#fff" stroke="#3a4658" stroke-width="1"/>
<rect x="50.1" y="510.3" width="10.5" height="2" fill="#2c3a50" />
<path d="M51.1 515.5 h8.5 M55.35 513.5 v6.5" fill="none" stroke="#cc3030" stroke-width="0.9" />
<circle cx="55.35" cy="518.3" r="1.3" fill="none" stroke="#cc3030" stroke-width="0.7"/>
<rect x="64.3" y="510.3" width="10.5" height="11" fill="#fff" stroke="#3a4658" stroke-width="1"/>
<rect x="64.3" y="510.3" width="10.5" height="2" fill="#2c3a50" />
<polygon points="66.8,519.5 69.55,514 72.3,519.5" fill="none" stroke="#cc3030" stroke-width="1"/>
<rect x="78.6" y="510.3" width="10.5" height="11" fill="#fff" stroke="#3a4658" stroke-width="1"/>
<rect x="78.6" y="510.3" width="10.5" height="2" fill="#2c3a50" />
<circle cx="82.1" cy="516.2" r="1.4" fill="#cc3030"/>
<rect x="85.6" y="513.5" width="1.2" height="7" fill="#cc3030" />
<rect x="93.6" y="510.3" width="10.5" height="11" fill="#fff" stroke="#3a4658" stroke-width="1"/>
<rect x="93.6" y="510.3" width="10.5" height="2" fill="#2c3a50" />
<rect x="96.1" y="513.5" width="1.2" height="6" fill="#cc3030" />
<circle cx="96.69999999999999" cy="519.2" r="1.1" fill="#cc3030"/><circle cx="100.6" cy="516.5" r="2" fill="none" stroke="#cc3030" stroke-width="0.8"/>
<rect x="107.9" y="510.3" width="10.5" height="11" fill="#fff" stroke="#3a4658" stroke-width="1"/>
<rect x="107.9" y="510.3" width="10.5" height="2" fill="#2c3a50" />
<path d="M109.4 520 v-4 h7.5 v4 z M111.4 516 v-1.8 h3.5 v1.8" fill="none" stroke="#cc3030" stroke-width="0.9" />
<rect x="122.5" y="510.3" width="10.5" height="11" fill="#fff" stroke="#3a4658" stroke-width="1"/>
<rect x="122.5" y="510.3" width="10.5" height="2" fill="#2c3a50" />
<text x="125.4" y="519.8" font-size="6.2" fill="#cc3030" >E</text>
<rect x="137.2" y="510.3" width="10.5" height="11" fill="#fff" stroke="#3a4658" stroke-width="1"/>
<rect x="137.2" y="510.3" width="10.5" height="2" fill="#2c3a50" />
<text x="138.0" y="518.8" font-size="4.3" fill="#cc3030" textLength="8.8" lengthAdjust="spacingAndGlyphs">Rho</text>
<rect x="151.7" y="510.3" width="10.5" height="11" fill="#fff" stroke="#3a4658" stroke-width="1"/>
<rect x="151.7" y="510.3" width="10.5" height="2" fill="#2c3a50" />
<path d="M152.7 515 q2 -2 4 0 t4 0 M152.7 518.5 q2 -2 4 0 t4 0" fill="none" stroke="#cc3030" stroke-width="0.8" />
<polygon points="165.4,518.5 168.6,518.5 167,520.3" fill="#222" />
<rect x="175.9" y="510" width="0.9" height="0.9" fill="#b8b8b8" />
<rect x="177.3" y="511" width="0.9" height="0.9" fill="#b8b8b8" />
<rect x="175.9" y="512" width="0.9" height="0.9" fill="#b8b8b8" />
<rect x="177.3" y="513" width="0.9" height="0.9" fill="#b8b8b8" />
<rect x="175.9" y="514" width="0.9" height="0.9" fill="#b8b8b8" />
<rect x="177.3" y="515" width="0.9" height="0.9" fill="#b8b8b8" />
<rect x="175.9" y="516" width="0.9" height="0.9" fill="#b8b8b8" />
<rect x="177.3" y="517" width="0.9" height="0.9" fill="#b8b8b8" />
<rect x="175.9" y="518" width="0.9" height="0.9" fill="#b8b8b8" />
<rect x="177.3" y="519" width="0.9" height="0.9" fill="#b8b8b8" />
<rect x="175.9" y="520" width="0.9" height="0.9" fill="#b8b8b8" />
<rect x="177.3" y="521" width="0.9" height="0.9" fill="#b8b8b8" />
<path d="M184 519 q3 1 6 -2 l3 -5" fill="none" stroke="#666" stroke-width="1" />
<path d="M186 517 l6 -5" fill="none" stroke="#555" stroke-width="1.3" />
<ellipse cx="186" cy="519.5" rx="2.8" ry="1.5" fill="none" stroke="#d04040" stroke-width="0.7"/>
<path d="M198.6 519 q3 1 6 -2 l3 -5" fill="none" stroke="#666" stroke-width="1" />
<path d="M200.6 517 l6 -5" fill="none" stroke="#555" stroke-width="1.3" />
<ellipse cx="200.6" cy="519.5" rx="2.8" ry="1.5" fill="none" stroke="#d04040" stroke-width="0.7"/>
<path d="M213 519 q3 1 6 -2 l3 -5" fill="none" stroke="#666" stroke-width="1" />
<path d="M215 517 l6 -5" fill="none" stroke="#555" stroke-width="1.3" />
<ellipse cx="215" cy="519.5" rx="2.8" ry="1.5" fill="none" stroke="#d04040" stroke-width="0.7"/>
<circle cx="230.5" cy="516" r="1.3" fill="#d04040"/>
<rect x="233.5" y="511.5" width="1.2" height="9" fill="#444" />
<rect x="241" y="510" width="0.8" height="11" fill="#d6d6d6" />
<rect x="246" y="511" width="6" height="6" fill="#fff" stroke="#555" stroke-width="0.9"/>
<rect x="247.5" y="512.5" width="3" height="3" fill="#d06060" />
<path d="M251 516 l3 3" fill="none" stroke="#333" stroke-width="1.3" />
<polygon points="257.2,518.5 260.40000000000003,518.5 258.8,520.3" fill="#222" />
<rect x="2" y="75.5" width="14.8" height="135" fill="#f4f4f6" />
<rect x="17.5" y="75.5" width="15" height="313" fill="#f4f4f6" />
<rect x="2" y="77.2" width="1.4" height="0.9" fill="#a0a0a0" />
<rect x="4" y="77.2" width="1.4" height="0.9" fill="#a0a0a0" />
<rect x="6" y="77.2" width="1.4" height="0.9" fill="#a0a0a0" />
<rect x="8" y="77.2" width="1.4" height="0.9" fill="#a0a0a0" />
<rect x="10" y="77.2" width="1.4" height="0.9" fill="#a0a0a0" />
<rect x="12" y="77.2" width="1.4" height="0.9" fill="#a0a0a0" />
<rect x="19" y="77.2" width="1.4" height="0.9" fill="#a0a0a0" />
<rect x="21" y="77.2" width="1.4" height="0.9" fill="#a0a0a0" />
<rect x="23" y="77.2" width="1.4" height="0.9" fill="#a0a0a0" />
<rect x="25" y="77.2" width="1.4" height="0.9" fill="#a0a0a0" />
<rect x="27" y="77.2" width="1.4" height="0.9" fill="#a0a0a0" />
<rect x="29" y="77.2" width="1.4" height="0.9" fill="#a0a0a0" />
<path d="M5 84 l7 7 M12 84 l-7 7 M8.5 83.5 v8 M4.5 87.5 h8" fill="none" stroke="#d84a4a" stroke-width="0.9" />
<path d="M4 101 a4.5 4 0 0 1 8.5 -1.5" fill="none" stroke="#3a8a3a" stroke-width="2" />
<polygon points="12.5,97 13.8,101.5 10,101" fill="#3a8a3a" />
<path d="M12.5 102.5 a4.5 4 0 0 1 -8.5 1.5" fill="none" stroke="#3a8a3a" stroke-width="2" />
<polygon points="4,106.5 2.8,102 6.5,102.5" fill="#3a8a3a" />
<polygon points="10.7,108.8 10.7,113.2 13.2,111" fill="#111" />
<rect x="2.5" y="117.2" width="12.0" height="0.8" fill="#d4d4d8" />
<rect x="3.9" y="124.6" width="1.5" height="5.8" fill="#34485e" />
<path d="M13 127.6 h-5" fill="none" stroke="#34485e" stroke-width="2" />
<polygon points="8.8,124.6 8.8,130.6 5.8,127.6" fill="#34485e" />
<path d="M12.2 142.6 h-5" fill="none" stroke="#34485e" stroke-width="1.8" />
<polygon points="7.5,140.5 7.5,144.7 5.2,142.6" fill="#34485e" />
<path d="M4.6 157.9 h5" fill="none" stroke="#34485e" stroke-width="1.8" />
<polygon points="9,155.8 9,160 11.5,157.9" fill="#34485e" />
<path d="M3.8 171.6 h6" fill="none" stroke="#34485e" stroke-width="1.8" />
<polygon points="9,169.3 9,173.9 11.3,171.6" fill="#34485e" />
<rect x="11.8" y="169" width="1.4" height="5.3" fill="#34485e" />
<rect x="3.2" y="184.5" width="3.2" height="3.3" fill="none" stroke="#34485e" stroke-width="0.9"/>
<rect x="7.1" y="184.5" width="3.2" height="3.3" fill="none" stroke="#34485e" stroke-width="0.9"/>
<rect x="11.0" y="184.5" width="3.2" height="3.3" fill="none" stroke="#34485e" stroke-width="0.9"/>
<path d="M8 184 q2 -2.5 4 0" fill="none" stroke="#c84040" stroke-width="0.8" />
<rect x="4.8" y="197" width="2.6" height="9" fill="none" stroke="#34485e" stroke-width="0.9" rx="1.2"/>
<rect x="9.5" y="197" width="2.6" height="9" fill="none" stroke="#34485e" stroke-width="0.9" rx="1.2"/>
<path d="M7 196 q2 -2 4 0" fill="none" stroke="#c84040" stroke-width="0.8" />
<polygon points="10.5,206.4 10.5,210.79999999999998 13.0,208.6" fill="#111" />
<path d="M21 84.5 h6 l2.5 -1.5 v1.5 h0.5 v8.3 h-9 z" fill="#e4e6ea" stroke="#4a525c" stroke-width="0.9" />
<rect x="22.3" y="86.5" width="6" height="2.2" fill="#fff" stroke="#4a525c" stroke-width="0.7"/>
<rect x="22.3" y="89.6" width="6" height="2.2" fill="#fff" stroke="#4a525c" stroke-width="0.7"/>
<rect x="20" y="100.5" width="3" height="5" fill="#8a96a8" rx="1" stroke="#34404e" stroke-width="0.7"/>
<rect x="27.6" y="100.5" width="3" height="5" fill="#8a96a8" rx="1" stroke="#34404e" stroke-width="0.7"/>
<rect x="23.8" y="105" width="3.4" height="5.2" fill="#e03a3a" rx="0.8"/>
<circle cx="25.5" cy="102.5" r="1.2" fill="#d02020"/>
<rect x="23" y="117" width="6" height="7" fill="#e8e8e8" stroke="#666" stroke-width="0.8"/>
<path d="M20.5 120.5 h4" fill="none" stroke="#d02020" stroke-width="1.3" />
<path d="M19 132 h12 M22.5 130.5 l2.5 3 l2.5 -3" fill="none" stroke="#c84040" stroke-width="1.1" />
<rect x="19" y="134" width="12" height="4.2" fill="#3a4a60" />
<path d="M20.5 136 h2 M24 136 h2 M27.5 136 h2" fill="none" stroke="#dfe4ea" stroke-width="0.8" />
<circle cx="25.2" cy="151.3" r="5" fill="#c8ccd4" stroke="#3a4658" stroke-width="1.2"/>
<path d="M20.5 151.3 h9.5 M25.2 146.5 v9.6" fill="none" stroke="#3a4658" stroke-width="0.8" />
<rect x="19.8" y="163.5" width="10.7" height="7" fill="none" stroke="#3a4658" stroke-width="1.2"/>
<circle cx="25.2" cy="163.5" r="1.5" fill="#d03030"/>
<path d="M20 181 h10.5" fill="none" stroke="#3a4658" stroke-width="1" />
<rect x="23.5" y="179" width="3.5" height="3.5" fill="#fff" stroke="#3a4658" stroke-width="0.8"/>
<path d="M21 184 h8" fill="none" stroke="#d03030" stroke-width="1" />
<path d="M20 192 h3 M27 192 h3" fill="none" stroke="#d03030" stroke-width="1" />
<rect x="19.8" y="195.5" width="10.8" height="3" fill="#3a5a90" />
<rect x="20.2" y="204.8" width="10.4" height="10.7" fill="#fff" stroke="#b82828" stroke-width="1"/>
<rect x="19.7" y="204.3" width="11.4" height="2.2" fill="#c02424" />
<path d="M22 208.3 l6.5 5.699999999999999 M28.5 208.3 l-6.5 5.699999999999999 M23.5 207.8 v7.199999999999999 M27 207.8 v7.199999999999999" fill="none" stroke="#d04848" stroke-width="0.8" />
<rect x="20.2" y="219.2" width="10.4" height="10.7" fill="#fff" stroke="#b82828" stroke-width="1"/>
<rect x="19.7" y="218.7" width="11.4" height="2.2" fill="#c02424" />
<path d="M23.5 222.2 v6.699999999999999 M27 222.2 v6.699999999999999 M21.5 224.2 h7.5 M21.5 226.7 h7.5" fill="none" stroke="#d04848" stroke-width="0.9" />
<rect x="20.2" y="233.4" width="10.4" height="11.8" fill="#fff" stroke="#b82828" stroke-width="1"/>
<rect x="19.7" y="232.9" width="11.4" height="2.2" fill="#c02424" />
<circle cx="25.4" cy="240.4" r="1.8" fill="#d03030"/>
<rect x="23.6" y="242.4" width="3.6" height="1" fill="#d03030" />
<rect x="20.2" y="248.7" width="10.4" height="11.0" fill="#fff" stroke="#b82828" stroke-width="1"/>
<rect x="19.7" y="248.2" width="11.4" height="2.2" fill="#c02424" />
<rect x="22" y="252.2" width="6.8" height="4" fill="#d85050" />
<path d="M25.4 256.2 v3 M22 258.2 h6.8" fill="none" stroke="#d03030" stroke-width="0.9" />
<path d="M24 263 l2 0 l-1 3 l2 6 M23 272 l2 -6" fill="none" stroke="#3a4658" stroke-width="1" />
<rect x="19.6" y="278" width="11" height="3.2" fill="#d42020" />
<rect x="23.5" y="280" width="3.2" height="7.2" fill="#d42020" />
<rect x="19.6" y="283" width="11" height="1.2" fill="#d42020" />
<path d="M28 293 v5 q0 3 -3 3 h-3" fill="none" stroke="#d42020" stroke-width="2.8" />
<path d="M20.5 316 h10 M22 314 l3 -8 l2 4 l2 -3 l1 7" fill="none" stroke="#d42020" stroke-width="1.2" />
<path d="M25 320 v2 M24 323 q3 2 0 5" fill="none" stroke="#3a4658" stroke-width="1" />
<circle cx="25" cy="319.5" r="0.8" fill="#d03030"/>
<rect x="21" y="335.5" width="8.5" height="10" fill="#fff" stroke="#c83030" stroke-width="1.2"/>
<path d="M22 344 l6 -7" fill="none" stroke="#d08080" stroke-width="0.7" />
<rect x="19.5" y="349" width="11.5" height="0.8" fill="#d4d4d8" />
<path d="M30 362.5 q-1 -5 -6 -4 v-3 l-4.5 4 l4.5 4 v-3 q4 -1 6 2" fill="#9aa0a8" stroke="none" stroke-width="1" />
<path d="M20 377.5 q1 -5 6 -4 v-3 l4.5 4 l-4.5 4 v-3 q-4 -1 -6 2" fill="#9aa0a8" stroke="none" stroke-width="1" />
<polygon points="26.9,380.0 26.9,384.4 29.4,382.2" fill="#111" />
<rect x="33.2" y="75.5" width="3.2" height="55.5" fill="#d4d8e0" />
<text x="0" y="0" font-size="6.8" fill="#3a3a3a" transform="translate(40.2,79.2) rotate(90)" textLength="51.5" font-weight="normal" lengthAdjust="spacingAndGlyphs">Classic Piping Input</text>
<rect x="889.3" y="75.5" width="20.5" height="248" fill="#f4f4f6" />
<rect x="911" y="75.5" width="21" height="378" fill="#f4f4f6" />
<rect x="891" y="77.2" width="1.4" height="0.9" fill="#a0a0a0" />
<rect x="893" y="77.2" width="1.4" height="0.9" fill="#a0a0a0" />
<rect x="895" y="77.2" width="1.4" height="0.9" fill="#a0a0a0" />
<rect x="897" y="77.2" width="1.4" height="0.9" fill="#a0a0a0" />
<rect x="899" y="77.2" width="1.4" height="0.9" fill="#a0a0a0" />
<rect x="901" y="77.2" width="1.4" height="0.9" fill="#a0a0a0" />
<rect x="903" y="77.2" width="1.4" height="0.9" fill="#a0a0a0" />
<rect x="905" y="77.2" width="1.4" height="0.9" fill="#a0a0a0" />
<rect x="907" y="77.2" width="1.4" height="0.9" fill="#a0a0a0" />
<rect x="912" y="77.2" width="1.4" height="0.9" fill="#a0a0a0" />
<rect x="914" y="77.2" width="1.4" height="0.9" fill="#a0a0a0" />
<rect x="916" y="77.2" width="1.4" height="0.9" fill="#a0a0a0" />
<rect x="918" y="77.2" width="1.4" height="0.9" fill="#a0a0a0" />
<rect x="920" y="77.2" width="1.4" height="0.9" fill="#a0a0a0" />
<rect x="922" y="77.2" width="1.4" height="0.9" fill="#a0a0a0" />
<rect x="924" y="77.2" width="1.4" height="0.9" fill="#a0a0a0" />
<rect x="926" y="77.2" width="1.4" height="0.9" fill="#a0a0a0" />
<rect x="928" y="77.2" width="1.4" height="0.9" fill="#a0a0a0" />
<rect x="930" y="77.2" width="1.4" height="0.9" fill="#a0a0a0" />
<rect x="894.5" y="84" width="10.5" height="7" fill="#b8c0cc" stroke="#3a4658" stroke-width="0.9" rx="1"/>
<rect x="897.5" y="83" width="4.5" height="2" fill="none" stroke="#3a4658" stroke-width="0.8"/>
<rect x="894.5" y="87" width="10.5" height="1" fill="#3a4658" />
<rect x="895.5" y="97" width="8.5" height="7" fill="#e0e6ee" stroke="#5a6470" stroke-width="0.8"/>
<rect x="894.5" y="104" width="10.5" height="3" fill="#3a4658" />
<rect x="891" y="110" width="17.5" height="0.8" fill="#d4d4d8" />
<rect x="891.6" y="115.5" width="11.4" height="7" fill="#c82828" rx="2.5"/>
<rect x="893" y="116.5" width="8" height="1.5" fill="#e87070" />
<rect x="906.9" y="118.5" width="1.2" height="1.2" fill="#777" />
<rect x="891" y="127" width="17.5" height="0.8" fill="#d4d4d8" />
<rect x="900.5" y="131" width="2.5" height="10.5" fill="#3a4a6a" />
<circle cx="897.5" cy="135.5" r="1.6" fill="#3a4a6a"/>
<rect x="901" y="133" width="1.5" height="1.5" fill="#fff" />
<rect x="901" y="137" width="1.5" height="1.5" fill="#fff" />
<rect x="900.5" y="145.3" width="2.5" height="10.5" fill="#3a4a6a" />
<circle cx="897" cy="151" r="1.8" fill="#3a4a6a"/>
<rect x="897" y="150.3" width="4" height="1.4" fill="#3a4a6a" />
<circle cx="899.7" cy="166" r="5" fill="#1a4a70"/><circle cx="898.5" cy="166" r="3" fill="#2a8ac0"/>
<rect x="898.7" y="159.6" width="2" height="2.2" fill="#d03030" />
<rect x="891" y="173.6" width="17.5" height="0.8" fill="#d4d4d8" />
<rect x="894.8" y="180.5" width="9" height="6.2" fill="none" stroke="#777" stroke-width="0.9"/>
<path d="M894 184 h11" fill="none" stroke="#777" stroke-width="0.8" />
<path d="M895 193 v3 h6 l2 2 v5 h-8 z" fill="#f4f4f4" stroke="#888" stroke-width="0.8" />
<path d="M894 203 h11" fill="none" stroke="#888" stroke-width="0.9" />
<rect x="891" y="206" width="17.5" height="0.8" fill="#d4d4d8" />
<rect x="895.8" y="210.7" width="2.2" height="7" fill="#fff" stroke="#c03030" stroke-width="0.7" rx="1"/>
<circle cx="896.9" cy="218.7" r="1.8" fill="#d02020"/>
<rect x="906.9" y="214.5" width="1.2" height="1.2" fill="#777" />
<circle cx="896.8" cy="230.2" r="4" fill="#fff" stroke="#3a4658" stroke-width="1.1"/>
<path d="M896.8 230.2 l2 -2" fill="none" stroke="#3a4658" stroke-width="0.9" />
<rect x="906.9" y="229.5" width="1.2" height="1.2" fill="#777" />
<rect x="891" y="238.3" width="17.5" height="0.8" fill="#d4d4d8" />
<circle cx="896" cy="243.5" r="2.2" fill="#c83040"/>
<rect x="897.5" y="245" width="8" height="8.5" fill="#c82818" rx="2"/>
<rect x="903" y="246" width="2" height="7" fill="#6a1a10" />
<path d="M894.5 265 v-7 q0 -1.5 1.5 -1.5 h1 q1.5 0 1.5 1.5 q0 1.5 -1.5 1.5 h-2.5" fill="none" stroke="#333" stroke-width="1" />
<ellipse cx="901" cy="264" rx="4" ry="3.5" fill="#8a98aa"/>
<rect x="897" y="262" width="3" height="4" fill="#2a3a50" />
<path d="M894.5 279.2 v-7 q0 -1.5 1.5 -1.5 h1 q1.5 0 1.5 1.5 q0 1.5 -1.5 1.5 h-2.5" fill="none" stroke="#333" stroke-width="1" />
<ellipse cx="901" cy="278.2" rx="4" ry="3.5" fill="#4a9ac8"/>
<rect x="897" y="276.2" width="3" height="4" fill="#2a3a50" />
<path d="M894.5 293.5 v-7 q0 -1.5 1.5 -1.5 h1 q1.5 0 1.5 1.5 q0 1.5 -1.5 1.5 h-2.5" fill="none" stroke="#333" stroke-width="1" />
<ellipse cx="901" cy="292.5" rx="4" ry="3.5" fill="#1a6a98"/>
<rect x="897" y="290.5" width="3" height="4" fill="#2a3a50" />
<rect x="907" y="290.5" width="1.2" height="1.2" fill="#777" />
<rect x="891" y="299.8" width="17.5" height="0.8" fill="#d4d4d8" />
<rect x="894.5" y="303.5" width="10.5" height="3" fill="#fff" stroke="#333" stroke-width="0.9" rx="1.5"/>
<rect x="894.5" y="303.5" width="2.5" height="3" fill="#333" />
<rect x="899.3" y="310.5" width="1.2" height="3.8" fill="#d42020" />
<polygon points="897.8,311.5 901.8,311.5 899.8,309.2" fill="#d42020" />
<polygon points="903,316.6 903,321.0 905.5,318.8" fill="#111" />
<path d="M914 92 v-4 h4 v-5 h5 v9 z" fill="#fff" stroke="#666" stroke-width="0.9" />
<rect x="928.8" y="86.5" width="1.2" height="1.2" fill="#777" />
<rect x="913.5" y="99" width="9.5" height="6" fill="#fff" stroke="#777" stroke-width="0.9"/>
<path d="M916 99 v6 M919 99 v6" fill="none" stroke="#999" stroke-width="0.7" />
<rect x="928.8" y="101.5" width="1.2" height="1.2" fill="#777" />
<rect x="913.5" y="112" width="9.5" height="8.5" fill="none" stroke="#777" stroke-width="0.9"/>
<path d="M916 112 v8.5 M918.5 112 v8.5 M921 112 v8.5" fill="none" stroke="#777" stroke-width="0.7" />
<rect x="928.8" y="115.5" width="1.2" height="1.2" fill="#777" />
<path d="M914 128.5 l9 2 v3.5 l-9 2 z" fill="#fff" stroke="#666" stroke-width="0.9" />
<rect x="928.8" y="131.5" width="1.2" height="1.2" fill="#777" />
<path d="M913.5 141.5 h10 v3 h-3.5 v5.5 h-3 v-5.5 h-3.5 z" fill="#fff" stroke="#555" stroke-width="0.9" />
<rect x="912.5" y="155" width="18.5" height="0.8" fill="#d4d4d8" />
<polygon points="913.5,165 918.5,159 923.5,165" fill="none" stroke="#666" stroke-width="0.9"/>
<path d="M913 166 l1 -1 l1 1 l1 -1 l1 1 l1 -1 l1 1 l1 -1 l1 1 l1 -1 l1 1" fill="none" stroke="#888" stroke-width="0.6" />
<rect x="913.5" y="174" width="9.5" height="7" fill="#ddd" stroke="#555" stroke-width="0.9"/>
<rect x="915.5" y="175.5" width="5.5" height="4" fill="#aaa" />
<rect x="928.8" y="177.0" width="1.2" height="1.2" fill="#777" />
<rect x="914" y="188" width="2.5" height="7.5" fill="#fff" stroke="#666" stroke-width="0.8"/>
<rect x="916.5" y="190.5" width="6.5" height="2.5" fill="#fff" stroke="#666" stroke-width="0.8"/>
<polygon points="914,210.7 917,203.5 920,210.7" fill="none" stroke="#555" stroke-width="1.1"/>
<text x="920" y="206" font-size="3.8" fill="#555" >x</text>
<rect x="912.5" y="215.5" width="18.5" height="0.8" fill="#d4d4d8" />
<rect x="918" y="220.2" width="1.1" height="5" fill="#666" />
<rect x="913.8" y="225.2" width="9.5" height="3.5" fill="#fff" stroke="#666" stroke-width="0.9"/>
<path d="M914 244 v-3 h8 v3 z M916 238 l3 -2 l2 2" fill="#f4f4f4" stroke="#888" stroke-width="0.8" />
<path d="M913.5 244 h10" fill="none" stroke="#777" stroke-width="0.8" />
<rect x="913.8" y="249" width="9.5" height="8.4" fill="#fff" stroke="#666" stroke-width="0.9"/>
<path d="M916 249 v8.4 M921 249 v8.4 M913.8 253 h9.5" fill="none" stroke="#888" stroke-width="0.7" />
<path d="M914 276 l9 -10.5 M914 270 q4 0 5 6" fill="none" stroke="#777" stroke-width="1" />
<path d="M917 281.7 v8.5 M917 284 h5 M917 287 h3" fill="none" stroke="#777" stroke-width="1" />
<rect x="919.5" y="282.5" width="2" height="2" fill="#fff" stroke="#777" stroke-width="0.6"/>
<path d="M913.5 302.5 v-2.5 h3 l2 -2 h2 l2 2 v2.5" fill="none" stroke="#666" stroke-width="0.9" />
<rect x="913" y="300" width="2" height="2.5" fill="none" stroke="#666" stroke-width="0.7"/>
<rect x="921" y="300" width="2" height="2.5" fill="none" stroke="#666" stroke-width="0.7"/>
<path d="M916 310.2 q4 3.8 0 7.7 z" fill="#ddd" stroke="#888" stroke-width="0.8" />
<rect x="928.8" y="313.5" width="1.2" height="1.2" fill="#777" />
<polygon points="924,322.3 924,326.7 926.5,324.5" fill="#111" />
<rect x="912.5" y="330.2" width="18.5" height="0.8" fill="#d4d4d8" />
<rect x="917.5" y="337.5" width="5" height="5.5" fill="#3a5a80" rx="1"/>
<path d="M915 337 l-1 4 M925 338 l-0.5 5 M919 345.5 h3" fill="none" stroke="#d03030" stroke-width="1" />
<circle cx="916.0" cy="356" r="1.8" fill="#3a5a80"/>
<circle cx="920.0" cy="356" r="1.8" fill="#3a5a80"/>
<path d="M922 356 l2 -3 l1 2" fill="none" stroke="#d03030" stroke-width="1" />
<circle cx="916" cy="369.8" r="2" fill="none" stroke="#3a4658" stroke-width="1"/><circle cx="922" cy="369.8" r="2" fill="none" stroke="#3a4658" stroke-width="1"/>
<path d="M918.3 369.8 h1.5" fill="none" stroke="#d03030" stroke-width="1" />
<path d="M914 381 h10" fill="none" stroke="#3a4658" stroke-width="1" />
<rect x="917.5" y="379.8" width="3" height="2.5" fill="#fff" stroke="#3a4658" stroke-width="0.7"/>
<path d="M915 384 h3 M920 386 h4" fill="none" stroke="#d03030" stroke-width="1.2" />
<rect x="918" y="393.5" width="4" height="11" fill="none" stroke="#3a4658" stroke-width="1"/>
<path d="M916 396 v6 h2 M924 396 v6 h-2" fill="none" stroke="#d03030" stroke-width="1" />
<rect x="914" y="407.5" width="3.5" height="3.5" fill="none" stroke="#3a5a80" stroke-width="0.9"/>
<rect x="919" y="407.5" width="3.5" height="3.5" fill="none" stroke="#3a5a80" stroke-width="0.9"/>
<rect x="918" y="412" width="7" height="7.5" fill="#fff" stroke="#c83030" stroke-width="1"/>
<path d="M914.5 413 l2 4" fill="none" stroke="#c83030" stroke-width="1.2" />
<polygon points="924,421.1 924,425.5 926.5,423.3" fill="#111" />
<rect x="912.5" y="429.5" width="18.5" height="0.8" fill="#d4d4d8" />
<path d="M918 442 q-1 -4 5 -6.5 q2 4 -3 6.5 z" fill="#5a64b0" stroke="none" stroke-width="1" />
<polygon points="924,447.2 924,451.59999999999997 926.5,449.4" fill="#111" />
<line x1="366.3" y1="286.1" x2="510.75" y2="369.5" stroke="#d8d8d8" stroke-width="0.6" />
<line x1="331.66" y1="306.1" x2="476.11" y2="389.5" stroke="#d8d8d8" stroke-width="0.6" />
<line x1="366.3" y1="286.1" x2="319.54" y2="313.1" stroke="#d8d8d8" stroke-width="0.6" />
<line x1="402.41" y1="306.95" x2="355.65" y2="333.95" stroke="#d8d8d8" stroke-width="0.6" />
<line x1="438.53" y1="327.8" x2="391.76" y2="354.8" stroke="#d8d8d8" stroke-width="0.6" />
<line x1="474.64" y1="348.65" x2="427.88" y2="375.65" stroke="#d8d8d8" stroke-width="0.6" />
<line x1="510.75" y1="369.5" x2="463.99" y2="396.5" stroke="#d8d8d8" stroke-width="0.6" />
<line x1="476.11" y1="389.5" x2="497.07" y2="395.6" stroke="#d8d8d8" stroke-width="0.6" />
<line x1="604.45" y1="340.0" x2="566.78" y2="361.75" stroke="#d8d8d8" stroke-width="0.6" />
<line x1="546.52" y1="350.05" x2="566.78" y2="361.75" stroke="#d8d8d8" stroke-width="0.6" />
<line x1="546.52" y1="350.05" x2="511.79" y2="370.1" stroke="#d8d8d8" stroke-width="0.6" />
<line x1="584.19" y1="328.3" x2="604.45" y2="340.0" stroke="#d8d8d8" stroke-width="0.5" />
<line x1="584.19" y1="328.3" x2="546.52" y2="350.05" stroke="#d8d8d8" stroke-width="0.5" />
<ellipse cx="318.6" cy="296" rx="6" ry="3.6" fill="#fff" stroke="#c4c4c4" stroke-width="0.7"/>
<ellipse cx="318.6" cy="311" rx="6" ry="3.6" fill="#fff" stroke="#c4c4c4" stroke-width="0.7"/>
<ellipse cx="354.1" cy="331.5" rx="6" ry="3.6" fill="#fff" stroke="#c4c4c4" stroke-width="0.7"/>
<ellipse cx="389.8" cy="352.4" rx="6" ry="3.6" fill="#fff" stroke="#c4c4c4" stroke-width="0.7"/>
<ellipse cx="426.5" cy="372.2" rx="6" ry="3.6" fill="#fff" stroke="#c4c4c4" stroke-width="0.7"/>
<ellipse cx="487.5" cy="392.7" rx="6" ry="3.6" fill="#fff" stroke="#c4c4c4" stroke-width="0.7"/>
<ellipse cx="560" cy="352" rx="6" ry="3.6" fill="#fff" stroke="#c4c4c4" stroke-width="0.7"/>
<ellipse cx="594.9" cy="332" rx="6" ry="3.6" fill="#fff" stroke="#c4c4c4" stroke-width="0.7"/>
<line x1="323.5" y1="298.5" x2="331.7" y2="306.1" stroke="#cccccc" stroke-width="0.6" />
<line x1="323.5" y1="309" x2="331.7" y2="306.1" stroke="#cccccc" stroke-width="0.6" />
<line x1="359" y1="329.5" x2="367.8" y2="326.9" stroke="#cccccc" stroke-width="0.6" />
<line x1="394.8" y1="350" x2="403.9" y2="347.7" stroke="#cccccc" stroke-width="0.6" />
<line x1="431.5" y1="369.8" x2="440" y2="368.5" stroke="#cccccc" stroke-width="0.6" />
<line x1="565" y1="350" x2="567" y2="356.5" stroke="#cccccc" stroke-width="0.6" />
<line x1="599.5" y1="330" x2="603.5" y2="337.5" stroke="#cccccc" stroke-width="0.6" />
<defs><linearGradient id="vg" x1="0" x2="1" y1="0" y2="0"><stop offset="0" stop-color="#6c6c6c"/><stop offset="0.12" stop-color="#9a9a9a"/><stop offset="0.35" stop-color="#b6b6b6"/><stop offset="0.6" stop-color="#a6a6a6"/><stop offset="0.9" stop-color="#8a8a8a"/><stop offset="1" stop-color="#6a6a6a"/></linearGradient><radialGradient id="hg" cx="0.5" cy="0.5" r="0.5"><stop offset="0" stop-color="#f0f0f0" stop-opacity="0.95"/><stop offset="1" stop-color="#d0d0d0" stop-opacity="0"/></radialGradient></defs>
<path d="M327.3 198 A18 16.5 0 0 1 363.3 198 V264 A18.5 16.5 0 0 1 326.3 264 Z" fill="url(#vg)"/>
<ellipse cx="340.5" cy="199" rx="8" ry="3.6" fill="url(#hg)"/>
<line x1="327.3" y1="264" x2="363.3" y2="264" stroke="#7c7c7c" stroke-width="0.6" />
<rect x="364.2" y="227.1" width="4.2" height="59.00000000000003" fill="#727272" />
<rect x="365.0" y="227.1" width="2.6" height="59.00000000000003" fill="#999999" />
<rect x="365.90000000000003" y="227.1" width="1.0" height="59.00000000000003" fill="#bdbdbd" />
<polygon points="361.3,286.1 366.3,283.5 371.3,286.1 366.3,288.70000000000005" fill="#7a7a7a" />
<rect x="400.31" y="247.95" width="4.2" height="59.0" fill="#727272" />
<rect x="401.11" y="247.95" width="2.6" height="59.0" fill="#999999" />
<rect x="402.01000000000005" y="247.95" width="1.0" height="59.0" fill="#bdbdbd" />
<polygon points="397.41,306.95 402.41,304.34999999999997 407.41,306.95 402.41,309.55" fill="#7a7a7a" />
<rect x="436.42999999999995" y="268.8" width="4.2" height="59.0" fill="#727272" />
<rect x="437.22999999999996" y="268.8" width="2.6" height="59.0" fill="#999999" />
<rect x="438.13" y="268.8" width="1.0" height="59.0" fill="#bdbdbd" />
<polygon points="433.53,327.8 438.53,325.2 443.53,327.8 438.53,330.40000000000003" fill="#7a7a7a" />
<rect x="472.53999999999996" y="289.65" width="4.2" height="59.0" fill="#727272" />
<rect x="473.34" y="289.65" width="2.6" height="59.0" fill="#999999" />
<rect x="474.24" y="289.65" width="1.0" height="59.0" fill="#bdbdbd" />
<polygon points="469.64,348.65 474.64,346.04999999999995 479.64,348.65 474.64,351.25" fill="#7a7a7a" />
<rect x="509.69" y="311.1" width="4.2" height="59.0" fill="#727272" />
<rect x="510.49" y="311.1" width="2.6" height="59.0" fill="#999999" />
<rect x="511.39000000000004" y="311.1" width="1.0" height="59.0" fill="#bdbdbd" />
<polygon points="506.79,370.1 511.79,367.5 516.79,370.1 511.79,372.70000000000005" fill="#7a7a7a" />
<rect x="602.35" y="281.0" width="4.2" height="59.0" fill="#727272" />
<rect x="603.15" y="281.0" width="2.6" height="59.0" fill="#999999" />
<rect x="604.0500000000001" y="281.0" width="1.0" height="59.0" fill="#bdbdbd" />
<polygon points="599.45,340.0 604.45,337.4 609.45,340.0 604.45,342.6" fill="#7a7a7a" />
<rect x="544.42" y="291.05" width="4.2" height="59.0" fill="#727272" />
<rect x="545.2199999999999" y="291.05" width="2.6" height="59.0" fill="#999999" />
<rect x="546.12" y="291.05" width="1.0" height="59.0" fill="#bdbdbd" />
<polygon points="541.52,350.05 546.52,347.45 551.52,350.05 546.52,352.65000000000003" fill="#7a7a7a" />
<rect x="564.68" y="302.75" width="4.2" height="59.0" fill="#727272" />
<rect x="565.4799999999999" y="302.75" width="2.6" height="59.0" fill="#999999" />
<rect x="566.38" y="302.75" width="1.0" height="59.0" fill="#bdbdbd" />
<polygon points="561.78,361.75 566.78,359.15 571.78,361.75 566.78,364.35" fill="#7a7a7a" />
<rect x="582.09" y="269.3" width="4.2" height="59.0" fill="#727272" />
<rect x="582.89" y="269.3" width="2.6" height="59.0" fill="#999999" />
<rect x="583.7900000000001" y="269.3" width="1.0" height="59.0" fill="#bdbdbd" />
<polygon points="579.19,328.3 584.19,325.7 589.19,328.3 584.19,330.90000000000003" fill="#7a7a7a" />
<rect x="329.56" y="249.1" width="4.2" height="57.00000000000003" fill="#727272" />
<rect x="330.36" y="249.1" width="2.6" height="57.00000000000003" fill="#999999" />
<rect x="331.26000000000005" y="249.1" width="1.0" height="57.00000000000003" fill="#bdbdbd" />
<polygon points="326.66,306.1 331.66,303.5 336.66,306.1 331.66,308.70000000000005" fill="#7a7a7a" />
<rect x="365.66999999999996" y="269.95" width="4.2" height="57.0" fill="#727272" />
<rect x="366.46999999999997" y="269.95" width="2.6" height="57.0" fill="#999999" />
<rect x="367.37" y="269.95" width="1.0" height="57.0" fill="#bdbdbd" />
<polygon points="362.77,326.95 367.77,324.34999999999997 372.77,326.95 367.77,329.55" fill="#7a7a7a" />
<rect x="401.78999999999996" y="290.8" width="4.2" height="57.0" fill="#727272" />
<rect x="402.59" y="290.8" width="2.6" height="57.0" fill="#999999" />
<rect x="403.49" y="290.8" width="1.0" height="57.0" fill="#bdbdbd" />
<polygon points="398.89,347.8 403.89,345.2 408.89,347.8 403.89,350.40000000000003" fill="#7a7a7a" />
<rect x="437.9" y="311.65" width="4.2" height="57.0" fill="#727272" />
<rect x="438.7" y="311.65" width="2.6" height="57.0" fill="#999999" />
<rect x="439.6" y="311.65" width="1.0" height="57.0" fill="#bdbdbd" />
<polygon points="435.0,368.65 440.0,366.04999999999995 445.0,368.65 440.0,371.25" fill="#7a7a7a" />
<rect x="474.01" y="332.5" width="4.2" height="57.0" fill="#727272" />
<rect x="474.81" y="332.5" width="2.6" height="57.0" fill="#999999" />
<rect x="475.71000000000004" y="332.5" width="1.0" height="57.0" fill="#bdbdbd" />
<polygon points="471.11,389.5 476.11,386.9 481.11,389.5 476.11,392.1" fill="#7a7a7a" />
<line x1="366.3" y1="229.1" x2="331.66" y2="249.1" stroke="#747474" stroke-width="3.8" stroke-linecap="butt"/>
<line x1="366.3" y1="229.1" x2="331.66" y2="249.1" stroke="#9c9c9c" stroke-width="2.4" stroke-linecap="butt"/>
<line x1="366.3" y1="229.1" x2="331.66" y2="249.1" stroke="#c0c0c0" stroke-width="0.8" />
<line x1="402.41" y1="249.95" x2="367.77" y2="269.95" stroke="#747474" stroke-width="3.8" stroke-linecap="butt"/>
<line x1="402.41" y1="249.95" x2="367.77" y2="269.95" stroke="#9c9c9c" stroke-width="2.4" stroke-linecap="butt"/>
<line x1="402.41" y1="249.95" x2="367.77" y2="269.95" stroke="#c0c0c0" stroke-width="0.8" />
<line x1="438.53" y1="270.8" x2="403.89" y2="290.8" stroke="#747474" stroke-width="3.8" stroke-linecap="butt"/>
<line x1="438.53" y1="270.8" x2="403.89" y2="290.8" stroke="#9c9c9c" stroke-width="2.4" stroke-linecap="butt"/>
<line x1="438.53" y1="270.8" x2="403.89" y2="290.8" stroke="#c0c0c0" stroke-width="0.8" />
<line x1="474.64" y1="291.65" x2="440.0" y2="311.65" stroke="#747474" stroke-width="3.8" stroke-linecap="butt"/>
<line x1="474.64" y1="291.65" x2="440.0" y2="311.65" stroke="#9c9c9c" stroke-width="2.4" stroke-linecap="butt"/>
<line x1="474.64" y1="291.65" x2="440.0" y2="311.65" stroke="#c0c0c0" stroke-width="0.8" />
<line x1="510.75" y1="312.5" x2="476.11" y2="332.5" stroke="#747474" stroke-width="3.8" stroke-linecap="butt"/>
<line x1="510.75" y1="312.5" x2="476.11" y2="332.5" stroke="#9c9c9c" stroke-width="2.4" stroke-linecap="butt"/>
<line x1="510.75" y1="312.5" x2="476.11" y2="332.5" stroke="#c0c0c0" stroke-width="0.8" />
<line x1="331.66" y1="249.1" x2="476.11" y2="332.5" stroke="#747474" stroke-width="4.0" stroke-linecap="butt"/>
<line x1="331.66" y1="249.1" x2="476.11" y2="332.5" stroke="#9c9c9c" stroke-width="2.6" stroke-linecap="butt"/>
<line x1="331.66" y1="249.1" x2="476.11" y2="332.5" stroke="#c0c0c0" stroke-width="0.8" />
<line x1="366.3" y1="231.1" x2="510.75" y2="314.5" stroke="#747474" stroke-width="3.2" stroke-linecap="butt"/>
<line x1="366.3" y1="231.1" x2="510.75" y2="314.5" stroke="#9c9c9c" stroke-width="1.7999999999999998" stroke-linecap="butt"/>
<line x1="366.3" y1="231.1" x2="510.75" y2="314.5" stroke="#c0c0c0" stroke-width="0.8" />
<polygon points="326.66,262.1 329.66,260.6 333.66,260.6 336.66,262.1 333.66,263.3 329.66,263.3" fill="#8a8a8a" />
<polygon points="362.77,282.95 365.77,281.45 369.77,281.45 372.77,282.95 369.77,284.15 365.77,284.15" fill="#8a8a8a" />
<polygon points="398.89,303.8 401.89,302.3 405.89,302.3 408.89,303.8 405.89,305.0 401.89,305.0" fill="#8a8a8a" />
<polygon points="435.0,324.65 438.0,323.15 442.0,323.15 445.0,324.65 442.0,325.84999999999997 438.0,325.84999999999997" fill="#8a8a8a" />
<polygon points="471.11,345.5 474.11,344.0 478.11,344.0 481.11,345.5 478.11,346.7 474.11,346.7" fill="#8a8a8a" />
<line x1="604.45" y1="306.0" x2="566.78" y2="327.75" stroke="#747474" stroke-width="3.5999999999999996" stroke-linecap="butt"/>
<line x1="604.45" y1="306.0" x2="566.78" y2="327.75" stroke="#9c9c9c" stroke-width="2.1999999999999997" stroke-linecap="butt"/>
<line x1="604.45" y1="306.0" x2="566.78" y2="327.75" stroke="#c0c0c0" stroke-width="0.8" />
<line x1="584.19" y1="294.3" x2="604.45" y2="306.0" stroke="#747474" stroke-width="3.2" stroke-linecap="butt"/>
<line x1="584.19" y1="294.3" x2="604.45" y2="306.0" stroke="#9c9c9c" stroke-width="1.7999999999999998" stroke-linecap="butt"/>
<line x1="584.19" y1="294.3" x2="604.45" y2="306.0" stroke="#c0c0c0" stroke-width="0.8" />
<line x1="566.78" y1="358.75" x2="604.45" y2="310.0" stroke="#8a8a8a" stroke-width="2.0" />
<line x1="566.78" y1="358.75" x2="604.45" y2="310.0" stroke="#b0b0b0" stroke-width="0.6" />
<polygon points="438.7,182.3 604.45,278.0 566.78,299.75 546.52,288.05 511.79,308.1 366.3,224.1" fill="#8d8d8d" />
<polygon points="366.3,224.1 511.79,308.1 511.79,312.1 366.3,228.1" fill="#787878" />
<polygon points="546.52,288.05 566.78,299.75 566.78,303.75 546.52,292.05" fill="#787878" />
<polygon points="511.79,308.1 546.52,288.05 546.52,292.05 511.79,312.1" fill="#6a6a6a" />
<polygon points="604.45,278.0 566.78,299.75 566.78,303.75 604.45,282.0" fill="#6a6a6a" />
<line x1="366.3" y1="224.1" x2="511.79" y2="308.1" stroke="#a4a4a4" stroke-width="0.8" />
<line x1="546.52" y1="288.05" x2="566.78" y2="299.75" stroke="#a4a4a4" stroke-width="0.8" />
<line x1="438.7" y1="182.3" x2="604.45" y2="278.0" stroke="#9a9a9a" stroke-width="0.8" />
<clipPath id="dk"><polygon points="438.7,182.3 604.45,278.0 566.78,299.75 546.52,288.05 511.79,308.1 366.3,224.1"/></clipPath>
<g clip-path="url(#dk)">
<rect x="436.7" y="182.3" width="4" height="62.0" fill="#a0a0a0" opacity="0.4"/>
<rect x="438.2" y="182.3" width="1" height="62.0" fill="#b4b4b4" opacity="0.3"/>
<rect x="472.81" y="203.15" width="4" height="61.99999999999997" fill="#a0a0a0" opacity="0.4"/>
<rect x="474.31" y="203.15" width="1" height="61.99999999999997" fill="#b4b4b4" opacity="0.3"/>
<rect x="508.92" y="224.0" width="4" height="62.0" fill="#a0a0a0" opacity="0.4"/>
<rect x="510.42" y="224.0" width="1" height="62.0" fill="#b4b4b4" opacity="0.3"/>
<rect x="545.04" y="244.85" width="4" height="62.00000000000003" fill="#a0a0a0" opacity="0.4"/>
<rect x="546.54" y="244.85" width="1" height="62.00000000000003" fill="#b4b4b4" opacity="0.3"/>
<rect x="581.15" y="265.7" width="4" height="62.0" fill="#a0a0a0" opacity="0.4"/>
<rect x="582.65" y="265.7" width="1" height="62.0" fill="#b4b4b4" opacity="0.3"/>
<line x1="474.81" y1="203.65" x2="402.41" y2="245.45" stroke="#707070" stroke-width="1.6" />
<line x1="476.54" y1="204.65" x2="404.15" y2="246.45" stroke="#a8a8a8" stroke-width="0.9" />
<line x1="510.92" y1="224.5" x2="438.53" y2="266.3" stroke="#707070" stroke-width="1.6" />
<line x1="512.66" y1="225.5" x2="440.26" y2="267.3" stroke="#a8a8a8" stroke-width="0.9" />
<line x1="547.04" y1="245.35" x2="474.64" y2="287.15" stroke="#707070" stroke-width="1.6" />
<line x1="548.77" y1="246.35" x2="476.37" y2="288.15" stroke="#a8a8a8" stroke-width="0.9" />
<line x1="584.19" y1="266.8" x2="546.52" y2="288.55" stroke="#707070" stroke-width="1.6" />
<line x1="585.92" y1="267.8" x2="548.25" y2="289.55" stroke="#a8a8a8" stroke-width="0.9" />
<line x1="401.03" y1="204.55" x2="546.52" y2="288.55" stroke="#707070" stroke-width="1.6" />
<line x1="399.3" y1="205.55" x2="544.78" y2="289.55" stroke="#a8a8a8" stroke-width="0.9" />
</g>
<line x1="366.3" y1="208.1" x2="438.7" y2="166.3" stroke="#7e7e7e" stroke-width="0.9" />
<line x1="366.3" y1="216.1" x2="438.7" y2="174.3" stroke="#7e7e7e" stroke-width="0.765" />
<line x1="366.3" y1="224.1" x2="366.3" y2="208.1" stroke="#7e7e7e" stroke-width="0.9" />
<line x1="390.43" y1="210.17" x2="390.43" y2="194.17" stroke="#7e7e7e" stroke-width="0.9" />
<line x1="414.57" y1="196.23" x2="414.57" y2="180.23" stroke="#7e7e7e" stroke-width="0.9" />
<line x1="438.7" y1="182.3" x2="438.7" y2="166.3" stroke="#7e7e7e" stroke-width="0.9" />
<line x1="438.7" y1="166.3" x2="604.45" y2="262.0" stroke="#7e7e7e" stroke-width="0.9" />
<line x1="438.7" y1="174.3" x2="604.45" y2="270.0" stroke="#7e7e7e" stroke-width="0.765" />
<line x1="438.7" y1="182.3" x2="438.7" y2="166.3" stroke="#7e7e7e" stroke-width="0.9" />
<line x1="471.85" y1="201.44" x2="471.85" y2="185.44" stroke="#7e7e7e" stroke-width="0.9" />
<line x1="505.0" y1="220.58" x2="505.0" y2="204.58" stroke="#7e7e7e" stroke-width="0.9" />
<line x1="538.15" y1="239.72" x2="538.15" y2="223.72" stroke="#7e7e7e" stroke-width="0.9" />
<line x1="571.3" y1="258.86" x2="571.3" y2="242.86" stroke="#7e7e7e" stroke-width="0.9" />
<line x1="604.45" y1="278.0" x2="604.45" y2="262.0" stroke="#7e7e7e" stroke-width="0.9" />
<line x1="604.45" y1="262.0" x2="566.78" y2="283.75" stroke="#7e7e7e" stroke-width="0.9" />
<line x1="604.45" y1="270.0" x2="566.78" y2="291.75" stroke="#7e7e7e" stroke-width="0.765" />
<line x1="604.45" y1="278.0" x2="604.45" y2="262.0" stroke="#7e7e7e" stroke-width="0.9" />
<line x1="585.62" y1="288.88" x2="585.62" y2="272.88" stroke="#7e7e7e" stroke-width="0.9" />
<line x1="566.78" y1="299.75" x2="566.78" y2="283.75" stroke="#7e7e7e" stroke-width="0.9" />
<line x1="511.79" y1="292.1" x2="546.52" y2="272.05" stroke="#7e7e7e" stroke-width="0.9" />
<line x1="511.79" y1="300.1" x2="546.52" y2="280.05" stroke="#7e7e7e" stroke-width="0.765" />
<line x1="511.79" y1="308.1" x2="511.79" y2="292.1" stroke="#7e7e7e" stroke-width="0.9" />
<line x1="546.52" y1="288.05" x2="546.52" y2="272.05" stroke="#7e7e7e" stroke-width="0.9" />
<line x1="366.3" y1="208.1" x2="511.79" y2="292.1" stroke="#7e7e7e" stroke-width="0.9" />
<line x1="366.3" y1="216.1" x2="511.79" y2="300.1" stroke="#7e7e7e" stroke-width="0.765" />
<line x1="366.3" y1="224.1" x2="366.3" y2="208.1" stroke="#7e7e7e" stroke-width="0.9" />
<line x1="395.4" y1="240.9" x2="395.4" y2="224.9" stroke="#7e7e7e" stroke-width="0.9" />
<line x1="424.5" y1="257.7" x2="424.5" y2="241.7" stroke="#7e7e7e" stroke-width="0.9" />
<line x1="453.6" y1="274.5" x2="453.6" y2="258.5" stroke="#7e7e7e" stroke-width="0.9" />
<line x1="482.69" y1="291.3" x2="482.69" y2="275.3" stroke="#7e7e7e" stroke-width="0.9" />
<line x1="511.79" y1="308.1" x2="511.79" y2="292.1" stroke="#7e7e7e" stroke-width="0.9" />
<rect x="494.96999999999997" y="369.6" width="4.2" height="26.0" fill="#727272" />
<rect x="495.77" y="369.6" width="2.6" height="26.0" fill="#999999" />
<rect x="496.67" y="369.6" width="1.0" height="26.0" fill="#bdbdbd" />
<polygon points="492.07,395.6 497.07,393.0 502.07,395.6 497.07,398.20000000000005" fill="#7a7a7a" />
<rect x="475.04999999999995" y="358.1" width="4.2" height="26.0" fill="#727272" />
<rect x="475.84999999999997" y="358.1" width="2.6" height="26.0" fill="#999999" />
<rect x="476.75" y="358.1" width="1.0" height="26.0" fill="#bdbdbd" />
<polygon points="472.15,384.1 477.15,381.5 482.15,384.1 477.15,386.70000000000005" fill="#7a7a7a" />
<rect x="529.26" y="349.8" width="4.2" height="26.0" fill="#727272" />
<rect x="530.06" y="349.8" width="2.6" height="26.0" fill="#999999" />
<rect x="530.96" y="349.8" width="1.0" height="26.0" fill="#bdbdbd" />
<polygon points="526.36,375.8 531.36,373.2 536.36,375.8 531.36,378.40000000000003" fill="#7a7a7a" />
<polygon points="477.15,352.1 497.07,363.6 497.07,372.6 477.15,361.1" fill="#8c8c8c" />
<polygon points="531.36,343.8 497.07,363.6 497.07,372.6 531.36,352.8" fill="#767676" />
<polygon points="511.44,332.3 531.36,343.8 497.07,363.6 477.15,352.1" fill="#a0a0a0" />
<line x1="511.44" y1="313.3" x2="477.15" y2="333.1" stroke="#7e7e7e" stroke-width="0.9" />
<line x1="511.44" y1="322.8" x2="477.15" y2="342.6" stroke="#7e7e7e" stroke-width="0.765" />
<line x1="511.44" y1="332.3" x2="511.44" y2="313.3" stroke="#7e7e7e" stroke-width="0.9" />
<line x1="494.3" y1="342.2" x2="494.3" y2="323.2" stroke="#7e7e7e" stroke-width="0.9" />
<line x1="477.15" y1="352.1" x2="477.15" y2="333.1" stroke="#7e7e7e" stroke-width="0.9" />
<line x1="511.44" y1="313.3" x2="531.36" y2="324.8" stroke="#7e7e7e" stroke-width="0.9" />
<line x1="511.44" y1="322.8" x2="531.36" y2="334.3" stroke="#7e7e7e" stroke-width="0.765" />
<line x1="511.44" y1="332.3" x2="511.44" y2="313.3" stroke="#7e7e7e" stroke-width="0.9" />
<line x1="531.36" y1="343.8" x2="531.36" y2="324.8" stroke="#7e7e7e" stroke-width="0.9" />
<polygon points="548.7,291.5 563,297.2 533.4,344 520,338.2" fill="#a0a0a0" />
<line x1="547.569090909091" y1="296.2945454545454" x2="557.7709090909091" y2="302.60545454545456" stroke="#ffffff" stroke-width="1.5" />
<line x1="544.96" y1="300.53999999999996" x2="555.08" y2="306.86" stroke="#ffffff" stroke-width="1.5" />
<line x1="542.3509090909091" y1="304.7854545454545" x2="552.3890909090909" y2="311.11454545454546" stroke="#ffffff" stroke-width="1.5" />
<line x1="539.7418181818182" y1="309.03090909090906" x2="549.6981818181819" y2="315.3690909090909" stroke="#ffffff" stroke-width="1.5" />
<line x1="537.1327272727273" y1="313.2763636363636" x2="547.0072727272727" y2="319.62363636363636" stroke="#ffffff" stroke-width="1.5" />
<line x1="534.5236363636363" y1="317.52181818181816" x2="544.3163636363636" y2="323.8781818181818" stroke="#ffffff" stroke-width="1.5" />
<line x1="531.9145454545454" y1="321.7672727272727" x2="541.6254545454545" y2="328.13272727272727" stroke="#ffffff" stroke-width="1.5" />
<line x1="529.3054545454546" y1="326.01272727272726" x2="538.9345454545454" y2="332.3872727272727" stroke="#ffffff" stroke-width="1.5" />
<line x1="526.6963636363637" y1="330.2581818181818" x2="536.2436363636364" y2="336.64181818181817" stroke="#ffffff" stroke-width="1.5" />
<line x1="524.0872727272728" y1="334.50363636363636" x2="533.5527272727272" y2="340.8963636363637" stroke="#ffffff" stroke-width="1.5" />
<line x1="548.7" y1="291.5" x2="520" y2="338.2" stroke="#707070" stroke-width="1.6" />
<line x1="563" y1="297.2" x2="533.4" y2="344" stroke="#707070" stroke-width="1.6" />
<line x1="550.6" y1="277" x2="519" y2="323" stroke="#7e7e7e" stroke-width="0.9" />
<line x1="563" y1="281" x2="533" y2="329" stroke="#7e7e7e" stroke-width="0.9" />
<line x1="519" y1="323" x2="519" y2="338" stroke="#7e7e7e" stroke-width="0.9" />
<line x1="533" y1="329" x2="533" y2="344" stroke="#7e7e7e" stroke-width="0.9" />
<line x1="535" y1="300" x2="535" y2="315" stroke="#7e7e7e" stroke-width="0.9" />
<polygon points="509.2,362 523,357.5 555.5,407.5 542.8,416.5" fill="#a0a0a0" />
<line x1="515.68" y1="368.96666666666664" x2="525.3333333333334" y2="364.4666666666667" stroke="#ffffff" stroke-width="1.5" />
<line x1="519.4133333333333" y1="375.0222222222222" x2="528.9444444444445" y2="370.02222222222224" stroke="#ffffff" stroke-width="1.5" />
<line x1="523.1466666666666" y1="381.0777777777778" x2="532.5555555555555" y2="375.5777777777778" stroke="#ffffff" stroke-width="1.5" />
<line x1="526.88" y1="387.1333333333333" x2="536.1666666666666" y2="381.1333333333333" stroke="#ffffff" stroke-width="1.5" />
<line x1="530.6133333333333" y1="393.18888888888887" x2="539.7777777777778" y2="386.6888888888889" stroke="#ffffff" stroke-width="1.5" />
<line x1="534.3466666666666" y1="399.2444444444444" x2="543.3888888888889" y2="392.24444444444447" stroke="#ffffff" stroke-width="1.5" />
<line x1="538.0799999999999" y1="405.3" x2="547.0" y2="397.8" stroke="#ffffff" stroke-width="1.5" />
<line x1="541.8133333333333" y1="411.35555555555555" x2="550.6111111111111" y2="403.35555555555555" stroke="#ffffff" stroke-width="1.5" />
<line x1="509.2" y1="362" x2="542.8" y2="416.5" stroke="#707070" stroke-width="1.6" />
<line x1="523" y1="357.5" x2="555.5" y2="407.5" stroke="#707070" stroke-width="1.6" />
<line x1="509" y1="347" x2="542" y2="402" stroke="#7e7e7e" stroke-width="0.9" />
<line x1="523" y1="342" x2="555.5" y2="393" stroke="#7e7e7e" stroke-width="0.9" />
<line x1="555.5" y1="393" x2="555.5" y2="407.5" stroke="#7e7e7e" stroke-width="0.9" />
<line x1="542" y1="402" x2="542" y2="416" stroke="#7e7e7e" stroke-width="0.9" />
<line x1="540" y1="370" x2="540" y2="384" stroke="#7e7e7e" stroke-width="0.9" />
<polygon points="420.9,377.8 435.8,369.8 469.6,383.5 450,393.8" fill="#a8a8a8" />
<polygon points="420.9,377.8 450,393.8 450,399.6 420.9,383.5" fill="#8e8e8e" />
<polygon points="450,393.8 469.6,383.5 469.6,389.3 450,399.6" fill="#9e9e9e" />
<path d="M330 219 L319.2 225.2 L445.3 304.2 L466 315 Q472 319 466 324 L459.4 328 V358" fill="none" stroke="#7484a4" stroke-width="4.4" stroke-linecap="butt" stroke-linejoin="round"/>
<path d="M330 219 L319.2 225.2 L445.3 304.2 L466 315 Q472 319 466 324 L459.4 328 V358" fill="none" stroke="#c4d0e4" stroke-width="2.8000000000000003" stroke-linecap="butt" stroke-linejoin="round"/>
<path d="M330 219 L319.2 225.2 L445.3 304.2 L466 315 Q472 319 466 324 L459.4 328 V358" fill="none" stroke="#f6f9ff" stroke-width="0.8" stroke-linecap="butt" stroke-linejoin="round"/>
<path d="M451 308 Q446 311 445 318 V350" fill="none" stroke="#7484a4" stroke-width="4.4" stroke-linecap="butt" stroke-linejoin="round"/>
<path d="M451 308 Q446 311 445 318 V350" fill="none" stroke="#c4d0e4" stroke-width="2.8000000000000003" stroke-linecap="butt" stroke-linejoin="round"/>
<path d="M451 308 Q446 311 445 318 V350" fill="none" stroke="#f6f9ff" stroke-width="0.8" stroke-linecap="butt" stroke-linejoin="round"/>
<ellipse cx="329.9" cy="218.7" rx="2.6" ry="1.8" fill="#22a03a"/>
<ellipse cx="337" cy="241" rx="2.6" ry="1.8" fill="#22a03a"/>
<ellipse cx="374.3" cy="261.8" rx="2.6" ry="1.8" fill="#22a03a"/>
<ellipse cx="408.7" cy="283.6" rx="2.6" ry="1.8" fill="#22a03a"/>
<ellipse cx="445.3" cy="304.2" rx="2.6" ry="1.8" fill="#22a03a"/>
<rect x="376.0" y="257.2" width="3.6" height="2.6" fill="#186a28"/>
<rect x="411.2" y="277.8" width="3.6" height="2.6" fill="#186a28"/>
<rect x="448.2" y="299.8" width="3.6" height="2.6" fill="#186a28"/>
<rect x="444.3" y="363" width="2.4" height="6" fill="#a8b0b8" />
<ellipse cx="445.5" cy="356.5" rx="2.6" ry="6.5" fill="#d8dcd8" stroke="#8a9a8a" stroke-width="0.6"/>
<ellipse cx="445.5" cy="350" rx="2.8" ry="1.6" fill="#2aa040"/><ellipse cx="445.5" cy="363" rx="2.8" ry="1.6" fill="#2aa040"/>
<rect x="457.8" y="371.5" width="2.4" height="6" fill="#a8b0b8" />
<ellipse cx="459" cy="365.0" rx="2.6" ry="6.5" fill="#d8dcd8" stroke="#8a9a8a" stroke-width="0.6"/>
<ellipse cx="459" cy="358.5" rx="2.8" ry="1.6" fill="#2aa040"/><ellipse cx="459" cy="371.5" rx="2.8" ry="1.6" fill="#2aa040"/>
<text x="296.4" y="232.9" font-size="13.2" fill="#d43a26" stroke="#d43a26" stroke-width="0.18" textLength="21.9" lengthAdjust="spacingAndGlyphs">200</text>
<text x="320.9" y="232.9" font-size="13.2" fill="#d43a26" stroke="#d43a26" stroke-width="0.18" textLength="21.5" lengthAdjust="spacingAndGlyphs">210</text>
<text x="314.9" y="243.6" font-size="13.2" fill="#d43a26" stroke="#d43a26" stroke-width="0.18" textLength="21.0" lengthAdjust="spacingAndGlyphs">190</text>
<text x="350" y="264.7" font-size="13.2" fill="#d43a26" stroke="#d43a26" stroke-width="0.18" textLength="22.0" lengthAdjust="spacingAndGlyphs">180</text>
<text x="386.8" y="285" font-size="13.2" fill="#d43a26" stroke="#d43a26" stroke-width="0.18" textLength="21.4" lengthAdjust="spacingAndGlyphs">170</text>
<text x="422.4" y="306.3" font-size="13.2" fill="#d43a26" stroke="#d43a26" stroke-width="0.18" textLength="21.1" lengthAdjust="spacingAndGlyphs">160</text>
<text x="448" y="320.7" font-size="13.2" fill="#d43a26" stroke="#d43a26" stroke-width="0.18" textLength="20.6" lengthAdjust="spacingAndGlyphs">120</text>
<text x="462.2" y="331.5" font-size="13.2" fill="#d43a26" stroke="#d43a26" stroke-width="0.18" textLength="14.5" lengthAdjust="spacingAndGlyphs">80</text>
<text x="462.2" y="362.4" font-size="13.2" fill="#d43a26" stroke="#d43a26" stroke-width="0.18" textLength="14.5" lengthAdjust="spacingAndGlyphs">60</text>
<text x="462" y="372.7" font-size="13.2" fill="#d43a26" stroke="#d43a26" stroke-width="0.18" textLength="15.0" lengthAdjust="spacingAndGlyphs">30</text>
<path d="M330 219 L319.2 225.2 L326 229.5" fill="none" stroke="#7484a4" stroke-width="4.4" stroke-linecap="butt" stroke-linejoin="round"/>
<path d="M330 219 L319.2 225.2 L326 229.5" fill="none" stroke="#c4d0e4" stroke-width="2.8000000000000003" stroke-linecap="butt" stroke-linejoin="round"/>
<path d="M330 219 L319.2 225.2 L326 229.5" fill="none" stroke="#f6f9ff" stroke-width="0.8" stroke-linecap="butt" stroke-linejoin="round"/>
<ellipse cx="329.9" cy="218.7" rx="2.6" ry="1.8" fill="#22a03a"/>
<path d="M390.5 365.5 v8.5 l2 -2 l1.6 3.2 l1.2 -0.6 l-1.6 -3 h2.8 z" fill="#fff" stroke="#222" stroke-width="0.6"/>
<circle cx="84.5" cy="448.8" r="3.4" fill="#d4d4d4"/><circle cx="89.5" cy="457.5" r="3.2" fill="#d0d0d0"/>
<line x1="67.5" y1="450.6" x2="79" y2="457.6" stroke="#a85a20" stroke-width="3"/><line x1="67.5" y1="450.6" x2="79" y2="457.6" stroke="#f0a050" stroke-width="1.3"/>
<line x1="79" y1="457.6" x2="90.5" y2="465" stroke="#b01818" stroke-width="3"/><line x1="79" y1="457.6" x2="90" y2="464.6" stroke="#e83a2a" stroke-width="1.2"/>
<circle cx="67.3" cy="450.5" r="1.6" fill="#803010"/><circle cx="90.5" cy="465" r="1.7" fill="#901010"/>
<line x1="79.2" y1="457.5" x2="79.2" y2="446" stroke="#1a8a1a" stroke-width="3.2"/><polygon points="76.4,447 82,447 79.2,443" fill="#2aa82a"/><line x1="79.8" y1="456" x2="79.8" y2="446" stroke="#6ad86a" stroke-width="0.8"/>
<line x1="80.5" y1="455.5" x2="89" y2="451" stroke="#1a2ac8" stroke-width="2.8"/><polygon points="87,448.2 91.6,450.2 89.2,453.8" fill="#1a2ad0"/>
<text x="62.3" y="448.4" font-size="6" fill="#d89a68" >N</text>
<text x="76.8" y="440.6" font-size="6" fill="#58b858" >Y</text>
<text x="92" y="448.6" font-size="6" fill="#6a7ac0" >X</text>
<text x="92.2" y="467.2" font-size="6" fill="#c04848" >Z</text></svg></body></html>
